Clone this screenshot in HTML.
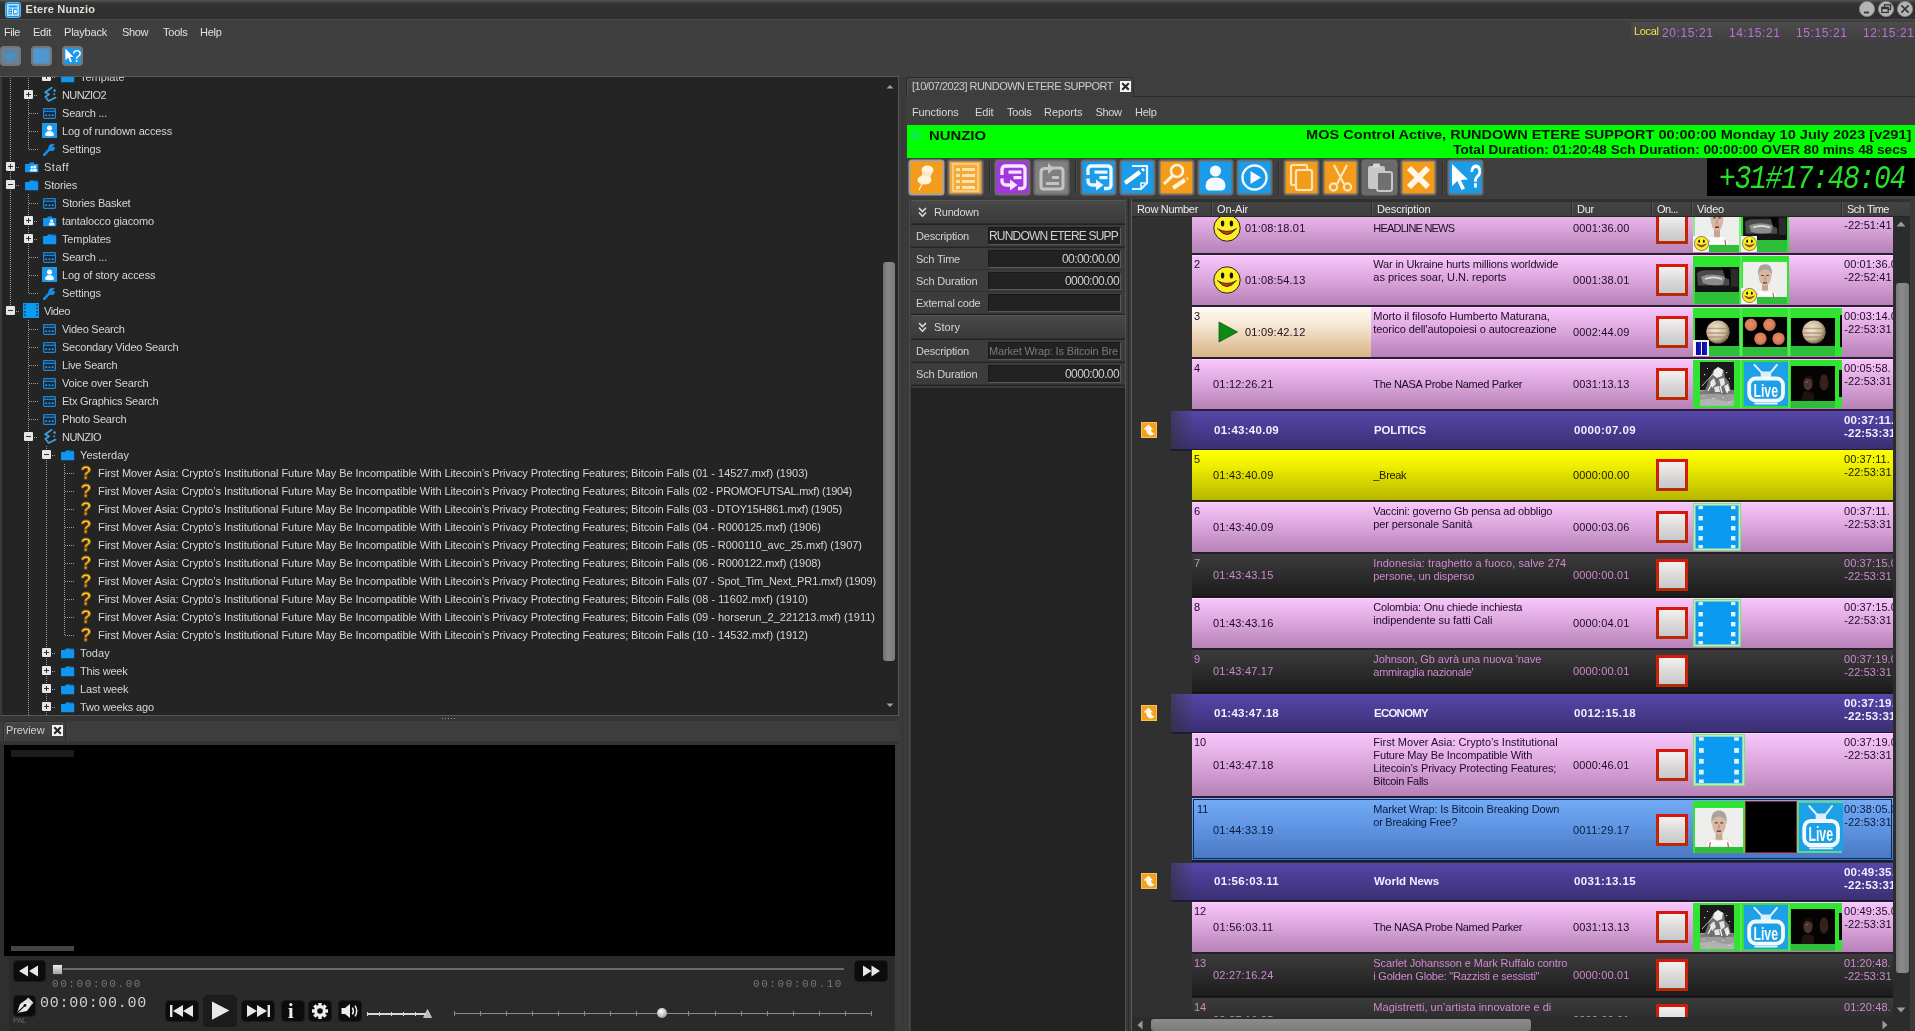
<!DOCTYPE html><html><head><meta charset="utf-8"><title>Etere Nunzio</title><style>html,body{margin:0;padding:0}body{width:1915px;height:1031px;overflow:hidden;background:#3f3f3f;position:relative;font-family:'Liberation Sans',sans-serif;font-size:11px}
div{position:absolute;box-sizing:content-box}.t{position:absolute;white-space:nowrap}.i{position:absolute;overflow:visible}</style></head><body><div id="root" style="left:0;top:0;width:1915px;height:1031px;overflow:hidden;will-change:transform;-webkit-font-smoothing:antialiased">
<svg width="0" height="0" style="position:absolute"><defs>
<linearGradient id="gq" x1="0" y1="0" x2="0" y2="1"><stop offset="0" stop-color="#ffe64a"/><stop offset="1" stop-color="#e8960c"/></linearGradient>
<linearGradient id="gchk" x1="0" y1="0" x2="0" y2="1"><stop offset="0" stop-color="#f6f4f4"/><stop offset="0.6" stop-color="#d8d6d4"/><stop offset="1" stop-color="#c4c6cc"/></linearGradient><linearGradient id="gchkb" x1="0" y1="0" x2="0" y2="1"><stop offset="0" stop-color="#d81808"/><stop offset="1" stop-color="#b82a06"/></linearGradient>
<radialGradient id="gjup" cx="0.4" cy="0.4" r="0.7"><stop offset="0" stop-color="#f4ead8"/><stop offset="0.6" stop-color="#cdb89a"/><stop offset="1" stop-color="#4a3c2c"/></radialGradient>
<radialGradient id="gmars" cx="0.45" cy="0.45" r="0.62"><stop offset="0" stop-color="#ee8e5e"/><stop offset="0.72" stop-color="#d0785a"/><stop offset="1" stop-color="#5a2a1c"/></radialGradient>
<symbol id="folder" viewBox="0 0 14 11"><path d="M0 2.2 L4 2.2 L5.2 0.6 L9.5 0.6 L9.5 2.2 L14 2.2 L14 11 L0 11 Z" fill="#1096f0"/><path d="M9.5 0.6 L13 0.6 L13.6 2.2 L9.5 2.2Z" fill="#0b78c8"/></symbol>
<symbol id="ufolder" viewBox="0 0 14 11"><path d="M0 2.2 L4 2.2 L5.2 0.6 L9.5 0.6 L9.5 2.2 L14 2.2 L14 11 L0 11 Z" fill="#1096f0"/><circle cx="9" cy="5" r="1.7" fill="#e8f4ff"/><path d="M6 10 Q6 6.6 9 6.6 Q12 6.6 12 10Z" fill="#e8f4ff"/></symbol>
<symbol id="sfolder" viewBox="0 0 14 11"><path d="M0 2.2 L4 2.2 L5.2 0.6 L9.5 0.6 L9.5 2.2 L14 2.2 L14 11 L0 11 Z" fill="#1096f0"/><circle cx="7.2" cy="5.6" r="1.5" fill="#e8f4ff"/><circle cx="10.2" cy="5" r="1.7" fill="#e8f4ff"/><path d="M5 10 Q5 7 7.4 7 L8 10Z M7.6 10 Q7.6 6.8 10.2 6.8 Q12.8 6.8 12.8 10Z" fill="#e8f4ff"/></symbol>
<symbol id="search" viewBox="0 0 13 11"><rect x="0.6" y="0.6" width="11.8" height="9.8" rx="0.8" fill="#16283a" stroke="#2285cf" stroke-width="1.2"/><rect x="0.6" y="2.6" width="11.8" height="1.3" fill="#2285cf"/><rect x="2.4" y="6.4" width="1.7" height="1.7" fill="#2ea0ee"/><rect x="5.6" y="6.4" width="1.7" height="1.7" fill="#2ea0ee"/><rect x="8.8" y="6.4" width="1.7" height="1.7" fill="#2ea0ee"/></symbol>
<symbol id="user" viewBox="0 0 16 16"><rect width="16" height="16" fill="#1a9af0"/><circle cx="8" cy="5.4" r="2.7" fill="#fff"/><path d="M3.2 13.4 Q3.2 8.4 8 8.4 Q12.8 8.4 12.8 13.4 Q8 14.6 3.2 13.4Z" fill="#fff"/></symbol>
<symbol id="wrench" viewBox="0 0 14 14"><path d="M1.2 12.8 L8 5.6" stroke="#1690ea" stroke-width="2.6" stroke-linecap="round"/><path d="M8.2 2.2 A3.4 3.4 0 1 0 12.2 6.2 L10.2 6.6 L8.2 5.2 L8.4 3Z" fill="#1690ea"/><circle cx="9.6" cy="4.4" r="2.6" fill="#1690ea"/><path d="M9.6 4.4 L13.4 0.6 L14 3 L11.6 5.6Z" fill="#252525"/></symbol>
<symbol id="nunzio" viewBox="0 0 14 15"><path d="M8.6 0.8 L2.2 5.2 L6 7.4 L2.4 9.8 L5.6 14 L12.4 10.6" fill="none" stroke="#3a9fdc" stroke-width="1.8" stroke-linejoin="round" stroke-linecap="round"/><circle cx="11.6" cy="3.6" r="1.3" fill="#3a9fdc"/><circle cx="11.2" cy="7.2" r="1" fill="#3a9fdc"/></symbol>
<symbol id="video" viewBox="0 0 16 15"><rect width="16" height="15" fill="#0a9bf5"/><g fill="#1c4f7a"><rect x="1" y="1.2" width="2" height="1.6"/><rect x="1" y="4.6" width="2" height="1.6"/><rect x="1" y="8" width="2" height="1.6"/><rect x="1" y="11.4" width="2" height="1.6"/><rect x="13" y="1.2" width="2" height="1.6"/><rect x="13" y="4.6" width="2" height="1.6"/><rect x="13" y="8" width="2" height="1.6"/><rect x="13" y="11.4" width="2" height="1.6"/></g></symbol>
<symbol id="plus" viewBox="0 0 9 9"><rect width="9" height="9" rx="1" fill="#e6e6e6"/><path d="M2 4.5H7M4.5 2V7" stroke="#333" stroke-width="1"/></symbol>
<symbol id="minus" viewBox="0 0 9 9"><rect width="9" height="9" rx="1" fill="#e6e6e6"/><path d="M2 4.5H7" stroke="#333" stroke-width="1"/></symbol>
<symbol id="smiley" viewBox="0 0 28 28"><circle cx="14" cy="14" r="13.2" fill="#ffee22" stroke="#222" stroke-width="1"/><ellipse cx="9.6" cy="9.6" rx="1.7" ry="3" fill="#111"/><ellipse cx="18.4" cy="9.6" rx="1.7" ry="3" fill="#111"/><path d="M5.6 15.4 Q14 25.6 22.4 15.4 Q14 19.4 5.6 15.4Z" fill="#e03010" stroke="#222" stroke-width="0.9"/><path d="M4.2 14.6 Q5.2 14.4 6.2 15.8 M23.8 14.6 Q22.8 14.4 21.8 15.8" stroke="#222" stroke-width="0.9" fill="none"/></symbol>
<symbol id="chk" viewBox="0 0 32 32"><rect x="1.5" y="1.5" width="29" height="29" fill="url(#gchk)" stroke="url(#gchkb)" stroke-width="3"/></symbol>
<symbol id="film" viewBox="0 0 48 48"><rect width="48" height="48" fill="#7fe47f"/><rect x="1" y="1" width="46" height="46" fill="#b8f0b8"/><rect x="2.5" y="2.5" width="43" height="43" fill="#0a9bf0"/><g fill="#dff2ff"><rect x="5.5" y="3" width="4.4" height="3.2"/><rect x="5.5" y="13" width="4.4" height="4.4"/><rect x="5.5" y="23" width="4.4" height="4.4"/><rect x="5.5" y="33" width="4.4" height="4.4"/><rect x="5.5" y="42" width="4.4" height="3.2"/><rect x="38" y="3" width="4.4" height="3.2"/><rect x="38" y="13" width="4.4" height="4.4"/><rect x="38" y="23" width="4.4" height="4.4"/><rect x="38" y="33" width="4.4" height="4.4"/><rect x="38" y="42" width="4.4" height="3.2"/></g></symbol>
<symbol id="tv" viewBox="0 0 44 44"><rect width="44" height="44" fill="#1e9fe8"/><path d="M13 3 L20 11 M31 3 L24 11" stroke="#e8f6ff" stroke-width="2.2" stroke-linecap="round"/><rect x="17" y="9.5" width="10" height="4" rx="1.5" fill="#d8eefc"/><rect x="5.5" y="15.5" width="33" height="23" rx="6" fill="none" stroke="#f2faff" stroke-width="3.4"/><path d="M12 41.5H32" stroke="#e8f6ff" stroke-width="2.4" stroke-linecap="round"/></symbol>
<symbol id="sect" viewBox="0 0 16 16"><rect width="16" height="16" fill="#f3a01c"/><rect x="0.5" y="0.5" width="15" height="15" fill="none" stroke="#f8c060" stroke-width="1"/><path d="M2.2 7.6 L7.4 2.4 L12.2 7.6 L9.8 7.6 Q10.6 11.2 13.8 11.4 Q11.4 14 8.6 13.2 Q5.4 12 5 7.6Z" fill="#fff8e8"/></symbol>
<symbol id="chev" viewBox="0 0 9 11"><path d="M1 1 L4.5 4.6 L8 1 M1 5.6 L4.5 9.2 L8 5.6" fill="none" stroke="#e0e0e0" stroke-width="1.5"/></symbol>
<symbol id="xbox" viewBox="0 0 11 11"><rect x="0" y="0" width="11" height="11" fill="#f6f6f6"/><path d="M2.2 2.2 L8.8 8.8 M8.8 2.2 L2.2 8.8" stroke="#262626" stroke-width="2.1"/></symbol>
</defs></svg>
<div style="left:0px;top:0px;width:1915px;height:20px;background:linear-gradient(#585858 0,#3e3e3e 2px,#323232 4px,#2f2f2f 100%);"></div>
<div style="left:0px;top:19px;width:1915px;height:1px;background:#4c4c4c;"></div>
<svg class="i" style="left:5px;top:2px" width="16" height="16" viewBox="0 0 17 17"><rect x="0.5" y="0.5" width="16" height="16" rx="2.5" fill="#1b93e6" stroke="#5cc0ff"/><rect x="3" y="3" width="11" height="11" fill="none" stroke="#e8f6ff" stroke-width="1.3"/><path d="M3 6.4H14 M8 6.4V14" stroke="#e8f6ff" stroke-width="1.2"/><rect x="9.6" y="8.4" width="3" height="3.6" fill="#e8f6ff"/><rect x="4.6" y="8.2" width="2" height="1.2" fill="#e8f6ff"/><rect x="4.6" y="10.8" width="2" height="1.2" fill="#e8f6ff"/></svg>
<span id="t1" class="t" style="top:1.7px;line-height:15px;font-size:11px;color:#e0dcd4;font-weight:700;left:25.6px;letter-spacing:0.196px;">Etere Nunzio</span>
<svg class="i" style="left:1859px;top:1px" width="16" height="16" viewBox="0 0 16 16"><circle cx="8" cy="8" r="7.6" fill="#b4b4b4"/><circle cx="8" cy="8" r="7.6" fill="none" stroke="#8a8a8a" stroke-width="0.8"/><path d="M5 11.5H10" stroke="#333" stroke-width="1.8"/></svg>
<svg class="i" style="left:1878px;top:1px" width="16" height="16" viewBox="0 0 16 16"><circle cx="8" cy="8" r="7.6" fill="#b4b4b4"/><circle cx="8" cy="8" r="7.6" fill="none" stroke="#8a8a8a" stroke-width="0.8"/><rect x="6.5" y="3.8" width="6" height="4.6" fill="none" stroke="#333" stroke-width="1.3"/><rect x="3.8" y="6.4" width="6.4" height="5" fill="#b8b8b8" stroke="#333" stroke-width="1.3"/><path d="M3.8 7.4H10.2" stroke="#333" stroke-width="1.6"/></svg>
<svg class="i" style="left:1897px;top:1px" width="16" height="16" viewBox="0 0 16 16"><circle cx="8" cy="8" r="7.6" fill="#b4b4b4"/><circle cx="8" cy="8" r="7.6" fill="none" stroke="#8a8a8a" stroke-width="0.8"/><path d="M4.4 4.4L11.6 11.6M11.6 4.4L4.4 11.6" stroke="#333" stroke-width="1.6"/></svg>
<span id="t2" class="t" style="top:24.5px;line-height:15px;font-size:11px;color:#e0e0e0;left:4px;letter-spacing:-0.434px;">File</span>
<span id="t3" class="t" style="top:24.5px;line-height:15px;font-size:11px;color:#e0e0e0;left:33px;letter-spacing:-0.242px;">Edit</span>
<span id="t4" class="t" style="top:24.5px;line-height:15px;font-size:11px;color:#e0e0e0;left:64px;letter-spacing:-0.205px;">Playback</span>
<span id="t5" class="t" style="top:24.5px;line-height:15px;font-size:11px;color:#e0e0e0;left:122px;letter-spacing:-0.379px;">Show</span>
<span id="t6" class="t" style="top:24.5px;line-height:15px;font-size:11px;color:#e0e0e0;left:163px;letter-spacing:-0.238px;">Tools</span>
<span id="t7" class="t" style="top:24.5px;line-height:15px;font-size:11px;color:#e0e0e0;left:200px;letter-spacing:-0.281px;">Help</span>
<div style="left:1631px;top:22px;width:284px;height:19px;background:linear-gradient(#4c4c4c,#3f3f3f);"></div>
<span id="t8" class="t" style="top:23.5px;line-height:15px;font-size:11px;color:#f0e24a;left:1634px;letter-spacing:-0.362px;">Local</span>
<span id="t9" class="t" style="top:24.5px;line-height:16px;font-size:12px;color:#c06fd6;left:1662px;letter-spacing:0.598px;">20:15:21</span>
<span id="t10" class="t" style="top:24.5px;line-height:16px;font-size:12px;color:#c06fd6;left:1729px;letter-spacing:0.598px;">14:15:21</span>
<span id="t11" class="t" style="top:24.5px;line-height:16px;font-size:12px;color:#c06fd6;left:1796px;letter-spacing:0.598px;">15:15:21</span>
<span id="t12" class="t" style="top:24.5px;line-height:16px;font-size:12px;color:#c06fd6;left:1863px;letter-spacing:0.598px;">12:15:21</span>
<svg class="i" style="left:0px;top:46px" width="21" height="20" viewBox="0 0 21 20"><rect x="1" y="1" width="19" height="18" rx="3" fill="#64849e" stroke="#767676" stroke-width="2"/><path d="M4 11 L11 6.4 L17 9.4 L10.4 14.6Z" fill="#3f94d2"/></svg>
<svg class="i" style="left:31px;top:46px" width="21" height="20" viewBox="0 0 21 20"><rect x="1" y="1" width="19" height="18" rx="3" fill="#5b8db6" stroke="#767676" stroke-width="2"/><rect x="3" y="3" width="15" height="14" fill="#4f97cf"/></svg>
<svg class="i" style="left:62px;top:46px" width="21" height="20" viewBox="0 0 21 20"><rect x="1" y="1" width="19" height="18" rx="3" fill="#1f97e8" stroke="#767676" stroke-width="2"/><path d="M3.4 2.6 L3.4 14.2 L6.2 11.6 L8.2 16.2 L10 15.4 L8 11 L11.6 11Z" fill="#fff"/></svg>
<span id="t13" class="t" style="top:46.5px;line-height:18px;font-size:16.5px;color:#f4fbff;left:72.3px;">?</span>
<div style="left:0px;top:76px;width:899px;height:1px;background:#585858;"></div>
<div id="tree" style="left:0;top:77px;width:899px;height:639px;background:#242424;overflow:hidden;border-left:2px solid #3a3a3a;border-right:1px solid #565656;border-bottom:1px solid #565656;box-sizing:border-box">
<div style="left:-2px;top:-77px;width:899px;height:800px">
<div style="left:10px;top:70px;width:1px;height:241px;background-image:repeating-linear-gradient(180deg,#9a9a9a 0,#9a9a9a 1px,transparent 1px,transparent 2px);"></div>
<div style="left:28px;top:70px;width:1px;height:79px;background-image:repeating-linear-gradient(180deg,#9a9a9a 0,#9a9a9a 1px,transparent 1px,transparent 2px);"></div>
<div style="left:28px;top:194px;width:1px;height:99px;background-image:repeating-linear-gradient(180deg,#9a9a9a 0,#9a9a9a 1px,transparent 1px,transparent 2px);"></div>
<div style="left:28px;top:320px;width:1px;height:400px;background-image:repeating-linear-gradient(180deg,#9a9a9a 0,#9a9a9a 1px,transparent 1px,transparent 2px);"></div>
<div style="left:46px;top:446px;width:1px;height:274px;background-image:repeating-linear-gradient(180deg,#9a9a9a 0,#9a9a9a 1px,transparent 1px,transparent 2px);"></div>
<div style="left:64px;top:464px;width:1px;height:171px;background-image:repeating-linear-gradient(180deg,#9a9a9a 0,#9a9a9a 1px,transparent 1px,transparent 2px);"></div>
<div style="left:52px;top:77px;width:4px;height:1px;background-image:repeating-linear-gradient(90deg,#9a9a9a 0,#9a9a9a 1px,transparent 1px,transparent 2px);"></div>
<svg class="i" style="left:42px;top:72px;" width="9" height="9"><use href="#plus"/></svg>
<svg class="i" style="left:61px;top:72px;" width="13.5" height="10.5"><use href="#folder"/></svg>
<span id="t14" class="t" style="top:69.5px;line-height:15px;font-size:11px;color:#d6d6d6;left:80px;">Template</span>
<div style="left:34px;top:95px;width:4px;height:1px;background-image:repeating-linear-gradient(90deg,#9a9a9a 0,#9a9a9a 1px,transparent 1px,transparent 2px);"></div>
<svg class="i" style="left:24px;top:90px;" width="9" height="9"><use href="#plus"/></svg>
<svg class="i" style="left:43px;top:87px;" width="14" height="15"><use href="#nunzio"/></svg>
<span id="t15" class="t" style="top:87.5px;line-height:15px;font-size:11px;color:#d6d6d6;left:62px;letter-spacing:-0.612px;">NUNZIO2</span>
<div style="left:29px;top:113px;width:10px;height:1px;background-image:repeating-linear-gradient(90deg,#9a9a9a 0,#9a9a9a 1px,transparent 1px,transparent 2px);"></div>
<svg class="i" style="left:43px;top:108px;" width="13" height="11"><use href="#search"/></svg>
<span id="t16" class="t" style="top:105.5px;line-height:15px;font-size:11px;color:#d6d6d6;left:62px;letter-spacing:-0.208px;">Search ...</span>
<div style="left:29px;top:131px;width:10px;height:1px;background-image:repeating-linear-gradient(90deg,#9a9a9a 0,#9a9a9a 1px,transparent 1px,transparent 2px);"></div>
<svg class="i" style="left:42px;top:123px;" width="15" height="15"><use href="#user"/></svg>
<span id="t17" class="t" style="top:123.5px;line-height:15px;font-size:11px;color:#d6d6d6;left:62px;letter-spacing:-0.149px;">Log of rundown access</span>
<div style="left:29px;top:149px;width:10px;height:1px;background-image:repeating-linear-gradient(90deg,#9a9a9a 0,#9a9a9a 1px,transparent 1px,transparent 2px);"></div>
<svg class="i" style="left:43px;top:142px;" width="14" height="14"><use href="#wrench"/></svg>
<span id="t18" class="t" style="top:141.5px;line-height:15px;font-size:11px;color:#d6d6d6;left:62px;letter-spacing:-0.094px;">Settings</span>
<div style="left:16px;top:167px;width:4px;height:1px;background-image:repeating-linear-gradient(90deg,#9a9a9a 0,#9a9a9a 1px,transparent 1px,transparent 2px);"></div>
<svg class="i" style="left:6px;top:162px;" width="9" height="9"><use href="#plus"/></svg>
<svg class="i" style="left:25px;top:162px;" width="13.5" height="10.5"><use href="#sfolder"/></svg>
<span id="t19" class="t" style="top:159.5px;line-height:15px;font-size:11px;color:#d6d6d6;left:44px;letter-spacing:0.515px;">Staff</span>
<div style="left:16px;top:185px;width:4px;height:1px;background-image:repeating-linear-gradient(90deg,#9a9a9a 0,#9a9a9a 1px,transparent 1px,transparent 2px);"></div>
<svg class="i" style="left:6px;top:180px;" width="9" height="9"><use href="#minus"/></svg>
<svg class="i" style="left:25px;top:180px;" width="13.5" height="10.5"><use href="#folder"/></svg>
<span id="t20" class="t" style="top:177.5px;line-height:15px;font-size:11px;color:#d6d6d6;left:44px;letter-spacing:-0.177px;">Stories</span>
<div style="left:29px;top:203px;width:10px;height:1px;background-image:repeating-linear-gradient(90deg,#9a9a9a 0,#9a9a9a 1px,transparent 1px,transparent 2px);"></div>
<svg class="i" style="left:43px;top:198px;" width="13" height="11"><use href="#search"/></svg>
<span id="t21" class="t" style="top:195.5px;line-height:15px;font-size:11px;color:#d6d6d6;left:62px;letter-spacing:-0.173px;">Stories Basket</span>
<div style="left:34px;top:221px;width:4px;height:1px;background-image:repeating-linear-gradient(90deg,#9a9a9a 0,#9a9a9a 1px,transparent 1px,transparent 2px);"></div>
<svg class="i" style="left:24px;top:216px;" width="9" height="9"><use href="#plus"/></svg>
<svg class="i" style="left:43px;top:216px;" width="13.5" height="10.5"><use href="#ufolder"/></svg>
<span id="t22" class="t" style="top:213.5px;line-height:15px;font-size:11px;color:#d6d6d6;left:62px;letter-spacing:-0.155px;">tantalocco giacomo</span>
<div style="left:34px;top:239px;width:4px;height:1px;background-image:repeating-linear-gradient(90deg,#9a9a9a 0,#9a9a9a 1px,transparent 1px,transparent 2px);"></div>
<svg class="i" style="left:24px;top:234px;" width="9" height="9"><use href="#plus"/></svg>
<svg class="i" style="left:43px;top:234px;" width="13.5" height="10.5"><use href="#folder"/></svg>
<span id="t23" class="t" style="top:231.5px;line-height:15px;font-size:11px;color:#d6d6d6;left:62px;letter-spacing:-0.127px;">Templates</span>
<div style="left:29px;top:257px;width:10px;height:1px;background-image:repeating-linear-gradient(90deg,#9a9a9a 0,#9a9a9a 1px,transparent 1px,transparent 2px);"></div>
<svg class="i" style="left:43px;top:252px;" width="13" height="11"><use href="#search"/></svg>
<span id="t24" class="t" style="top:249.5px;line-height:15px;font-size:11px;color:#d6d6d6;left:62px;letter-spacing:-0.208px;">Search ...</span>
<div style="left:29px;top:275px;width:10px;height:1px;background-image:repeating-linear-gradient(90deg,#9a9a9a 0,#9a9a9a 1px,transparent 1px,transparent 2px);"></div>
<svg class="i" style="left:42px;top:267px;" width="15" height="15"><use href="#user"/></svg>
<span id="t25" class="t" style="top:267.5px;line-height:15px;font-size:11px;color:#d6d6d6;left:62px;letter-spacing:-0.067px;">Log of story access</span>
<div style="left:29px;top:293px;width:10px;height:1px;background-image:repeating-linear-gradient(90deg,#9a9a9a 0,#9a9a9a 1px,transparent 1px,transparent 2px);"></div>
<svg class="i" style="left:43px;top:286px;" width="14" height="14"><use href="#wrench"/></svg>
<span id="t26" class="t" style="top:285.5px;line-height:15px;font-size:11px;color:#d6d6d6;left:62px;letter-spacing:-0.094px;">Settings</span>
<div style="left:16px;top:311px;width:4px;height:1px;background-image:repeating-linear-gradient(90deg,#9a9a9a 0,#9a9a9a 1px,transparent 1px,transparent 2px);"></div>
<svg class="i" style="left:6px;top:306px;" width="9" height="9"><use href="#minus"/></svg>
<svg class="i" style="left:23px;top:303px;" width="16" height="15"><use href="#video"/></svg>
<span id="t27" class="t" style="top:303.5px;line-height:15px;font-size:11px;color:#d6d6d6;left:44px;letter-spacing:-0.388px;">Video</span>
<div style="left:29px;top:329px;width:10px;height:1px;background-image:repeating-linear-gradient(90deg,#9a9a9a 0,#9a9a9a 1px,transparent 1px,transparent 2px);"></div>
<svg class="i" style="left:43px;top:324px;" width="13" height="11"><use href="#search"/></svg>
<span id="t28" class="t" style="top:321.5px;line-height:15px;font-size:11px;color:#d6d6d6;left:62px;letter-spacing:-0.279px;">Video Search</span>
<div style="left:29px;top:347px;width:10px;height:1px;background-image:repeating-linear-gradient(90deg,#9a9a9a 0,#9a9a9a 1px,transparent 1px,transparent 2px);"></div>
<svg class="i" style="left:43px;top:342px;" width="13" height="11"><use href="#search"/></svg>
<span id="t29" class="t" style="top:339.5px;line-height:15px;font-size:11px;color:#d6d6d6;left:62px;letter-spacing:-0.227px;">Secondary Video Search</span>
<div style="left:29px;top:365px;width:10px;height:1px;background-image:repeating-linear-gradient(90deg,#9a9a9a 0,#9a9a9a 1px,transparent 1px,transparent 2px);"></div>
<svg class="i" style="left:43px;top:360px;" width="13" height="11"><use href="#search"/></svg>
<span id="t30" class="t" style="top:357.5px;line-height:15px;font-size:11px;color:#d6d6d6;left:62px;letter-spacing:-0.236px;">Live Search</span>
<div style="left:29px;top:383px;width:10px;height:1px;background-image:repeating-linear-gradient(90deg,#9a9a9a 0,#9a9a9a 1px,transparent 1px,transparent 2px);"></div>
<svg class="i" style="left:43px;top:378px;" width="13" height="11"><use href="#search"/></svg>
<span id="t31" class="t" style="top:375.5px;line-height:15px;font-size:11px;color:#d6d6d6;left:62px;letter-spacing:-0.164px;">Voice over Search</span>
<div style="left:29px;top:401px;width:10px;height:1px;background-image:repeating-linear-gradient(90deg,#9a9a9a 0,#9a9a9a 1px,transparent 1px,transparent 2px);"></div>
<svg class="i" style="left:43px;top:396px;" width="13" height="11"><use href="#search"/></svg>
<span id="t32" class="t" style="top:393.5px;line-height:15px;font-size:11px;color:#d6d6d6;left:62px;letter-spacing:-0.231px;">Etx Graphics Search</span>
<div style="left:29px;top:419px;width:10px;height:1px;background-image:repeating-linear-gradient(90deg,#9a9a9a 0,#9a9a9a 1px,transparent 1px,transparent 2px);"></div>
<svg class="i" style="left:43px;top:414px;" width="13" height="11"><use href="#search"/></svg>
<span id="t33" class="t" style="top:411.5px;line-height:15px;font-size:11px;color:#d6d6d6;left:62px;letter-spacing:-0.180px;">Photo Search</span>
<div style="left:34px;top:437px;width:4px;height:1px;background-image:repeating-linear-gradient(90deg,#9a9a9a 0,#9a9a9a 1px,transparent 1px,transparent 2px);"></div>
<svg class="i" style="left:24px;top:432px;" width="9" height="9"><use href="#minus"/></svg>
<svg class="i" style="left:43px;top:429px;" width="14" height="15"><use href="#nunzio"/></svg>
<span id="t34" class="t" style="top:429.5px;line-height:15px;font-size:11px;color:#d6d6d6;left:62px;letter-spacing:-0.529px;">NUNZIO</span>
<div style="left:52px;top:455px;width:4px;height:1px;background-image:repeating-linear-gradient(90deg,#9a9a9a 0,#9a9a9a 1px,transparent 1px,transparent 2px);"></div>
<svg class="i" style="left:42px;top:450px;" width="9" height="9"><use href="#minus"/></svg>
<svg class="i" style="left:61px;top:450px;" width="13.5" height="10.5"><use href="#folder"/></svg>
<span id="t35" class="t" style="top:447.5px;line-height:15px;font-size:11px;color:#d6d6d6;left:80px;letter-spacing:0.052px;">Yesterday</span>
<div style="left:65px;top:473px;width:10px;height:1px;background-image:repeating-linear-gradient(90deg,#9a9a9a 0,#9a9a9a 1px,transparent 1px,transparent 2px);"></div>
<svg class="i" style="left:79px;top:465px" width="14" height="16" viewBox="0 0 14 16"><text x="7" y="14" text-anchor="middle" font-family="Liberation Sans" font-weight="700" font-size="18" fill="url(#gq)" stroke="#9a5e06" stroke-width="0.8">?</text></svg>
<span id="t36" class="t" style="top:465.5px;line-height:15px;font-size:11px;color:#d6d6d6;left:98px;letter-spacing:-0.083px;">First Mover Asia: Crypto’s Institutional Future May Be Incompatible With Litecoin’s Privacy Protecting Features; Bitcoin Falls</span>
<span id="t37" class="t" style="top:465.5px;line-height:15px;font-size:11px;color:#d6d6d6;left:692.3px;letter-spacing:0.006px;">(01 - 14527.mxf) (1903)</span>
<div style="left:65px;top:491px;width:10px;height:1px;background-image:repeating-linear-gradient(90deg,#9a9a9a 0,#9a9a9a 1px,transparent 1px,transparent 2px);"></div>
<svg class="i" style="left:79px;top:483px" width="14" height="16" viewBox="0 0 14 16"><text x="7" y="14" text-anchor="middle" font-family="Liberation Sans" font-weight="700" font-size="18" fill="url(#gq)" stroke="#9a5e06" stroke-width="0.8">?</text></svg>
<span id="t38" class="t" style="top:483.5px;line-height:15px;font-size:11px;color:#d6d6d6;left:98px;letter-spacing:-0.083px;">First Mover Asia: Crypto’s Institutional Future May Be Incompatible With Litecoin’s Privacy Protecting Features; Bitcoin Falls</span>
<span id="t39" class="t" style="top:483.5px;line-height:15px;font-size:11px;color:#d6d6d6;left:692.3px;letter-spacing:-0.311px;">(02 - PROMOFUTSAL.mxf) (1904)</span>
<div style="left:65px;top:509px;width:10px;height:1px;background-image:repeating-linear-gradient(90deg,#9a9a9a 0,#9a9a9a 1px,transparent 1px,transparent 2px);"></div>
<svg class="i" style="left:79px;top:501px" width="14" height="16" viewBox="0 0 14 16"><text x="7" y="14" text-anchor="middle" font-family="Liberation Sans" font-weight="700" font-size="18" fill="url(#gq)" stroke="#9a5e06" stroke-width="0.8">?</text></svg>
<span id="t40" class="t" style="top:501.5px;line-height:15px;font-size:11px;color:#d6d6d6;left:98px;letter-spacing:-0.083px;">First Mover Asia: Crypto’s Institutional Future May Be Incompatible With Litecoin’s Privacy Protecting Features; Bitcoin Falls</span>
<span id="t41" class="t" style="top:501.5px;line-height:15px;font-size:11px;color:#d6d6d6;left:692.3px;letter-spacing:-0.149px;">(03 - DTOY15H861.mxf) (1905)</span>
<div style="left:65px;top:527px;width:10px;height:1px;background-image:repeating-linear-gradient(90deg,#9a9a9a 0,#9a9a9a 1px,transparent 1px,transparent 2px);"></div>
<svg class="i" style="left:79px;top:519px" width="14" height="16" viewBox="0 0 14 16"><text x="7" y="14" text-anchor="middle" font-family="Liberation Sans" font-weight="700" font-size="18" fill="url(#gq)" stroke="#9a5e06" stroke-width="0.8">?</text></svg>
<span id="t42" class="t" style="top:519.5px;line-height:15px;font-size:11px;color:#d6d6d6;left:98px;letter-spacing:-0.083px;">First Mover Asia: Crypto’s Institutional Future May Be Incompatible With Litecoin’s Privacy Protecting Features; Bitcoin Falls</span>
<span id="t43" class="t" style="top:519.5px;line-height:15px;font-size:11px;color:#d6d6d6;left:692.3px;letter-spacing:-0.037px;">(04 - R000125.mxf) (1906)</span>
<div style="left:65px;top:545px;width:10px;height:1px;background-image:repeating-linear-gradient(90deg,#9a9a9a 0,#9a9a9a 1px,transparent 1px,transparent 2px);"></div>
<svg class="i" style="left:79px;top:537px" width="14" height="16" viewBox="0 0 14 16"><text x="7" y="14" text-anchor="middle" font-family="Liberation Sans" font-weight="700" font-size="18" fill="url(#gq)" stroke="#9a5e06" stroke-width="0.8">?</text></svg>
<span id="t44" class="t" style="top:537.5px;line-height:15px;font-size:11px;color:#d6d6d6;left:98px;letter-spacing:-0.083px;">First Mover Asia: Crypto’s Institutional Future May Be Incompatible With Litecoin’s Privacy Protecting Features; Bitcoin Falls</span>
<span id="t45" class="t" style="top:537.5px;line-height:15px;font-size:11px;color:#d6d6d6;left:692.3px;letter-spacing:-0.022px;">(05 - R000110_avc_25.mxf) (1907)</span>
<div style="left:65px;top:563px;width:10px;height:1px;background-image:repeating-linear-gradient(90deg,#9a9a9a 0,#9a9a9a 1px,transparent 1px,transparent 2px);"></div>
<svg class="i" style="left:79px;top:555px" width="14" height="16" viewBox="0 0 14 16"><text x="7" y="14" text-anchor="middle" font-family="Liberation Sans" font-weight="700" font-size="18" fill="url(#gq)" stroke="#9a5e06" stroke-width="0.8">?</text></svg>
<span id="t46" class="t" style="top:555.5px;line-height:15px;font-size:11px;color:#d6d6d6;left:98px;letter-spacing:-0.083px;">First Mover Asia: Crypto’s Institutional Future May Be Incompatible With Litecoin’s Privacy Protecting Features; Bitcoin Falls</span>
<span id="t47" class="t" style="top:555.5px;line-height:15px;font-size:11px;color:#d6d6d6;left:692.3px;letter-spacing:-0.037px;">(06 - R000122.mxf) (1908)</span>
<div style="left:65px;top:581px;width:10px;height:1px;background-image:repeating-linear-gradient(90deg,#9a9a9a 0,#9a9a9a 1px,transparent 1px,transparent 2px);"></div>
<svg class="i" style="left:79px;top:573px" width="14" height="16" viewBox="0 0 14 16"><text x="7" y="14" text-anchor="middle" font-family="Liberation Sans" font-weight="700" font-size="18" fill="url(#gq)" stroke="#9a5e06" stroke-width="0.8">?</text></svg>
<span id="t48" class="t" style="top:573.5px;line-height:15px;font-size:11px;color:#d6d6d6;left:98px;letter-spacing:-0.083px;">First Mover Asia: Crypto’s Institutional Future May Be Incompatible With Litecoin’s Privacy Protecting Features; Bitcoin Falls</span>
<span id="t49" class="t" style="top:573.5px;line-height:15px;font-size:11px;color:#d6d6d6;left:692.3px;letter-spacing:-0.120px;">(07 - Spot_Tim_Next_PR1.mxf) (1909)</span>
<div style="left:65px;top:599px;width:10px;height:1px;background-image:repeating-linear-gradient(90deg,#9a9a9a 0,#9a9a9a 1px,transparent 1px,transparent 2px);"></div>
<svg class="i" style="left:79px;top:591px" width="14" height="16" viewBox="0 0 14 16"><text x="7" y="14" text-anchor="middle" font-family="Liberation Sans" font-weight="700" font-size="18" fill="url(#gq)" stroke="#9a5e06" stroke-width="0.8">?</text></svg>
<span id="t50" class="t" style="top:591.5px;line-height:15px;font-size:11px;color:#d6d6d6;left:98px;letter-spacing:-0.083px;">First Mover Asia: Crypto’s Institutional Future May Be Incompatible With Litecoin’s Privacy Protecting Features; Bitcoin Falls</span>
<span id="t51" class="t" style="top:591.5px;line-height:15px;font-size:11px;color:#d6d6d6;left:692.3px;letter-spacing:0.042px;">(08 - 11602.mxf) (1910)</span>
<div style="left:65px;top:617px;width:10px;height:1px;background-image:repeating-linear-gradient(90deg,#9a9a9a 0,#9a9a9a 1px,transparent 1px,transparent 2px);"></div>
<svg class="i" style="left:79px;top:609px" width="14" height="16" viewBox="0 0 14 16"><text x="7" y="14" text-anchor="middle" font-family="Liberation Sans" font-weight="700" font-size="18" fill="url(#gq)" stroke="#9a5e06" stroke-width="0.8">?</text></svg>
<span id="t52" class="t" style="top:609.5px;line-height:15px;font-size:11px;color:#d6d6d6;left:98px;letter-spacing:-0.083px;">First Mover Asia: Crypto’s Institutional Future May Be Incompatible With Litecoin’s Privacy Protecting Features; Bitcoin Falls</span>
<span id="t53" class="t" style="top:609.5px;line-height:15px;font-size:11px;color:#d6d6d6;left:692.3px;letter-spacing:0.002px;">(09 - horserun_2_221213.mxf) (1911)</span>
<div style="left:65px;top:635px;width:10px;height:1px;background-image:repeating-linear-gradient(90deg,#9a9a9a 0,#9a9a9a 1px,transparent 1px,transparent 2px);"></div>
<svg class="i" style="left:79px;top:627px" width="14" height="16" viewBox="0 0 14 16"><text x="7" y="14" text-anchor="middle" font-family="Liberation Sans" font-weight="700" font-size="18" fill="url(#gq)" stroke="#9a5e06" stroke-width="0.8">?</text></svg>
<span id="t54" class="t" style="top:627.5px;line-height:15px;font-size:11px;color:#d6d6d6;left:98px;letter-spacing:-0.083px;">First Mover Asia: Crypto’s Institutional Future May Be Incompatible With Litecoin’s Privacy Protecting Features; Bitcoin Falls</span>
<span id="t55" class="t" style="top:627.5px;line-height:15px;font-size:11px;color:#d6d6d6;left:692.3px;letter-spacing:0.006px;">(10 - 14532.mxf) (1912)</span>
<div style="left:52px;top:653px;width:4px;height:1px;background-image:repeating-linear-gradient(90deg,#9a9a9a 0,#9a9a9a 1px,transparent 1px,transparent 2px);"></div>
<svg class="i" style="left:42px;top:648px;" width="9" height="9"><use href="#plus"/></svg>
<svg class="i" style="left:61px;top:648px;" width="13.5" height="10.5"><use href="#folder"/></svg>
<span id="t56" class="t" style="top:645.5px;line-height:15px;font-size:11px;color:#d6d6d6;left:80px;letter-spacing:0.128px;">Today</span>
<div style="left:52px;top:671px;width:4px;height:1px;background-image:repeating-linear-gradient(90deg,#9a9a9a 0,#9a9a9a 1px,transparent 1px,transparent 2px);"></div>
<svg class="i" style="left:42px;top:666px;" width="9" height="9"><use href="#plus"/></svg>
<svg class="i" style="left:61px;top:666px;" width="13.5" height="10.5"><use href="#folder"/></svg>
<span id="t57" class="t" style="top:663.5px;line-height:15px;font-size:11px;color:#d6d6d6;left:80px;letter-spacing:-0.224px;">This week</span>
<div style="left:52px;top:689px;width:4px;height:1px;background-image:repeating-linear-gradient(90deg,#9a9a9a 0,#9a9a9a 1px,transparent 1px,transparent 2px);"></div>
<svg class="i" style="left:42px;top:684px;" width="9" height="9"><use href="#plus"/></svg>
<svg class="i" style="left:61px;top:684px;" width="13.5" height="10.5"><use href="#folder"/></svg>
<span id="t58" class="t" style="top:681.5px;line-height:15px;font-size:11px;color:#d6d6d6;left:80px;letter-spacing:-0.115px;">Last week</span>
<div style="left:52px;top:707px;width:4px;height:1px;background-image:repeating-linear-gradient(90deg,#9a9a9a 0,#9a9a9a 1px,transparent 1px,transparent 2px);"></div>
<svg class="i" style="left:42px;top:702px;" width="9" height="9"><use href="#plus"/></svg>
<svg class="i" style="left:61px;top:702px;" width="13.5" height="10.5"><use href="#folder"/></svg>
<span id="t59" class="t" style="top:699.5px;line-height:15px;font-size:11px;color:#d6d6d6;left:80px;letter-spacing:-0.141px;">Two weeks ago</span>
</div>
<svg class="i" style="left:883px;top:6px" width="10" height="6"><path d="M1.5 5.5L5 2L8.5 5.5Z" fill="#a2a2a2"/></svg>
<svg class="i" style="left:883px;top:626px" width="10" height="6"><path d="M1.5 0.5L5 4L8.5 0.5Z" fill="#a2a2a2"/></svg>
<div style="left:881px;top:185px;width:12px;height:399px;background:linear-gradient(90deg,#727272,#888 40%,#7a7a7a);border-radius:3px;"></div>
</div>
<div style="left:899px;top:77px;width:8px;height:954px;background:#3b3b3b;"></div>
<div style="left:902px;top:100px;width:1px;height:931px;background:#343434;"></div>
<div style="left:0px;top:716px;width:899px;height:5px;background:#353535;"></div>
<div style="left:442px;top:718px;width:1px;height:1px;background:#999;"></div>
<div style="left:445px;top:718px;width:1px;height:1px;background:#999;"></div>
<div style="left:448px;top:718px;width:1px;height:1px;background:#999;"></div>
<div style="left:451px;top:718px;width:1px;height:1px;background:#999;"></div>
<div style="left:454px;top:718px;width:1px;height:1px;background:#999;"></div>
<div style="left:0px;top:721px;width:899px;height:21px;background:#3d3d3d;"></div>
<div style="left:3px;top:721px;width:63px;height:21px;background:linear-gradient(#454545,#3c3c3c);border:1px solid #2c2c2c;border-bottom:none;border-radius:4px 4px 0 0;box-sizing:border-box;box-shadow:inset 1px 1px 0 #505050;"></div>
<span id="t60" class="t" style="top:722.5px;line-height:15px;font-size:11px;color:#cfcfcf;left:6px;letter-spacing:-0.091px;">Preview</span>
<svg class="i" style="left:52px;top:725px;" width="11" height="11"><use href="#xbox"/></svg>
<div style="left:0px;top:741px;width:899px;height:4px;background:#333;"></div>
<div style="left:0px;top:745px;width:899px;height:286px;background:#2f2f2f;"></div>
<div style="left:4px;top:745px;width:891px;height:211px;background:#000;"></div>
<div style="left:11px;top:750px;width:63px;height:7px;background:#1c1c1c;"></div>
<div style="left:11px;top:946px;width:63px;height:5px;background:#454545;"></div>
<div style="left:9px;top:956px;width:885px;height:75px;background:#2a2a2a;"></div>
<div style="left:895px;top:744px;width:4px;height:287px;background:#3a3a3a;"></div>
<svg class="i" style="left:13px;top:960px" width="33" height="22" viewBox="0 0 33 22"><rect x="0.5" y="0.5" width="32" height="21" rx="4" fill="#0c0c0c" stroke="#1a1a1a"/><path d="M15 5.5V16.5L6 11ZM25 5.5V16.5L16 11Z" fill="#e8e8e8"/></svg>
<svg class="i" style="left:854px;top:960px" width="34" height="22" viewBox="0 0 34 22"><rect x="0.5" y="0.5" width="33" height="21" rx="4" fill="#0c0c0c" stroke="#1a1a1a"/><path d="M9 5.5V16.5L17.5 11ZM17.5 5.5V16.5L26 11Z" fill="#e8e8e8"/></svg>
<div style="left:52px;top:968px;width:792px;height:2px;background:#6a6a6a;"></div>
<div style="left:52px;top:964px;width:11px;height:11px;background:linear-gradient(#f0f0f0,#a0a0a0);border:1px solid #333;box-sizing:border-box;"></div>
<span id="t61" class="t" style="top:976.5px;line-height:15px;font-size:11px;color:#777;font-family:'Liberation Mono',monospace;left:52px;letter-spacing:1.580px;">00:00:00.00</span>
<span id="t62" class="t" style="top:976.5px;line-height:15px;font-size:11px;color:#777;font-family:'Liberation Mono',monospace;left:753px;letter-spacing:1.580px;">00:00:00.10</span>
<svg class="i" style="left:13px;top:995px" width="23" height="22" viewBox="0 0 23 22"><rect x="0.5" y="0.5" width="22" height="21" rx="4" fill="#0c0c0c" stroke="#1a1a1a"/><path d="M4 18 L7 9 L14 4 L19 9 L14 16Z" fill="#e8e8e8"/><path d="M4 18L11.4 10.8" stroke="#0c0c0c" stroke-width="1.1"/><circle cx="12" cy="10.4" r="1.4" fill="#0c0c0c"/><path d="M15.2 2.6L20.4 7.8L19 9.2L13.8 4Z" fill="#e8e8e8"/></svg>
<span id="t63" class="t" style="top:993.5px;line-height:19px;font-size:15px;color:#d0d0d0;font-family:'Liberation Mono',monospace;left:40px;letter-spacing:0.725px;">00:00:00.00</span>
<span id="t64" class="t" style="top:1015.0px;line-height:12px;font-size:8px;color:#666;left:13px;letter-spacing:-0.510px;">PAL</span>
<svg class="i" style="left:165px;top:1000px" width="34" height="22" viewBox="0 0 34 22"><rect x="0.5" y="0.5" width="33" height="21" rx="4" fill="#0c0c0c" stroke="#1a1a1a"/><rect x="5" y="5" width="2.4" height="12" fill="#e8e8e8"/><path d="M18 5V17L8 11ZM28 5V17L18 11Z" fill="#e8e8e8"/></svg>
<svg class="i" style="left:203px;top:995px" width="34" height="32" viewBox="0 0 34 32"><rect x="0.5" y="0.5" width="33" height="31" rx="4" fill="#1c1c1c" stroke="#1a1a1a"/><path d="M9 6.4V24.8L26.4 15.6Z" fill="#e8e8e8"/></svg>
<svg class="i" style="left:241px;top:1000px" width="34" height="22" viewBox="0 0 34 22"><rect x="0.5" y="0.5" width="33" height="21" rx="4" fill="#0c0c0c" stroke="#1a1a1a"/><rect x="26.6" y="5" width="2.4" height="12" fill="#e8e8e8"/><path d="M6 5V17L16 11ZM16 5V17L26 11Z" fill="#e8e8e8"/></svg>
<svg class="i" style="left:281px;top:1000px" width="24" height="22" viewBox="0 0 24 22"><rect x="0.5" y="0.5" width="23" height="21" rx="4" fill="#0c0c0c" stroke="#1a1a1a"/></svg>
<span id="t65" class="t" style="top:1000.0px;line-height:22px;font-size:20px;color:#f0f0f0;font-family:'Liberation Serif',serif;font-weight:700;left:288px;">i</span>
<svg class="i" style="left:308px;top:1000px" width="24" height="22" viewBox="0 0 24 22"><rect x="0.5" y="0.5" width="23" height="21" rx="4" fill="#0c0c0c" stroke="#1a1a1a"/><g transform="translate(12 11)"><g fill="#ececec"><rect x="-1.7" y="-8" width="3.4" height="16"/><rect x="-1.7" y="-8" width="3.4" height="16" transform="rotate(45)"/><rect x="-1.7" y="-8" width="3.4" height="16" transform="rotate(90)"/><rect x="-1.7" y="-8" width="3.4" height="16" transform="rotate(135)"/><circle r="6"/></g><circle r="2.8" fill="#0c0c0c"/></g></svg>
<svg class="i" style="left:338px;top:1000px" width="24" height="22" viewBox="0 0 24 22"><rect x="0.5" y="0.5" width="23" height="21" rx="4" fill="#0c0c0c" stroke="#1a1a1a"/><path d="M3.5 8H7L12 4V18L7 14H3.5Z" fill="#ececec"/><path d="M14.4 7.6Q16.4 11 14.4 14.4M17 5.6Q20.4 11 17 16.4" stroke="#ececec" stroke-width="1.5" fill="none"/></svg>
<div style="left:367px;top:1013px;width:60px;height:2px;background:#d8d8d8;"></div>
<div style="left:367px;top:1012px;width:1px;height:4px;background:#d8d8d8;"></div>
<div style="left:379px;top:1012px;width:1px;height:4px;background:#d8d8d8;"></div>
<div style="left:391px;top:1012px;width:1px;height:4px;background:#d8d8d8;"></div>
<div style="left:403px;top:1012px;width:1px;height:4px;background:#d8d8d8;"></div>
<div style="left:415px;top:1012px;width:1px;height:4px;background:#d8d8d8;"></div>
<div style="left:427px;top:1012px;width:1px;height:4px;background:#d8d8d8;"></div>
<svg class="i" style="left:423px;top:1009px" width="9" height="9"><path d="M0.5 8.5L4.5 0.5L8.5 8.5Z" fill="#bdbdbd" stroke="#eee" stroke-width="0.6"/></svg>
<div style="left:454px;top:1013px;width:418px;height:1px;background:#8a8a8a;"></div>
<div style="left:454px;top:1011px;width:1px;height:5px;background:#8a8a8a;"></div>
<div style="left:480px;top:1011px;width:1px;height:5px;background:#8a8a8a;"></div>
<div style="left:506px;top:1011px;width:1px;height:5px;background:#8a8a8a;"></div>
<div style="left:532px;top:1011px;width:1px;height:5px;background:#8a8a8a;"></div>
<div style="left:558px;top:1011px;width:1px;height:5px;background:#8a8a8a;"></div>
<div style="left:584px;top:1011px;width:1px;height:5px;background:#8a8a8a;"></div>
<div style="left:610px;top:1011px;width:1px;height:5px;background:#8a8a8a;"></div>
<div style="left:636px;top:1011px;width:1px;height:5px;background:#8a8a8a;"></div>
<div style="left:662px;top:1011px;width:1px;height:5px;background:#8a8a8a;"></div>
<div style="left:688px;top:1011px;width:1px;height:5px;background:#8a8a8a;"></div>
<div style="left:715px;top:1011px;width:1px;height:5px;background:#8a8a8a;"></div>
<div style="left:741px;top:1011px;width:1px;height:5px;background:#8a8a8a;"></div>
<div style="left:767px;top:1011px;width:1px;height:5px;background:#8a8a8a;"></div>
<div style="left:793px;top:1011px;width:1px;height:5px;background:#8a8a8a;"></div>
<div style="left:819px;top:1011px;width:1px;height:5px;background:#8a8a8a;"></div>
<div style="left:845px;top:1011px;width:1px;height:5px;background:#8a8a8a;"></div>
<div style="left:871px;top:1011px;width:1px;height:5px;background:#8a8a8a;"></div>
<div style="left:657px;top:1008px;width:10px;height:10px;background:radial-gradient(circle at 40% 35%,#fff,#aaa 70%,#777);border-radius:50%;"></div>
<div style="left:907px;top:96px;width:1008px;height:1px;background:#2a2a2a;"></div>
<div style="left:906px;top:77px;width:228px;height:20px;background:linear-gradient(#474747,#3c3c3c);border:1px solid #2b2b2b;border-bottom:none;border-radius:4px 4px 0 0;box-sizing:border-box;box-shadow:inset 1px 1px 0 #505050;"></div>
<span id="t66" class="t" style="top:79.0px;line-height:15px;font-size:11px;color:#cdcdcd;left:912px;letter-spacing:-0.519px;">[10/07/2023] RUNDOWN ETERE SUPPORT</span>
<svg class="i" style="left:1120px;top:81px;" width="11" height="11"><use href="#xbox"/></svg>
<span id="t67" class="t" style="top:104.5px;line-height:15px;font-size:11px;color:#d8d8d8;left:912px;letter-spacing:-0.132px;">Functions</span>
<span id="t68" class="t" style="top:104.5px;line-height:15px;font-size:11px;color:#d8d8d8;left:975px;letter-spacing:-0.117px;">Edit</span>
<span id="t69" class="t" style="top:104.5px;line-height:15px;font-size:11px;color:#d8d8d8;left:1007px;letter-spacing:-0.238px;">Tools</span>
<span id="t70" class="t" style="top:104.5px;line-height:15px;font-size:11px;color:#d8d8d8;left:1044px;letter-spacing:-0.004px;">Reports</span>
<span id="t71" class="t" style="top:104.5px;line-height:15px;font-size:11px;color:#d8d8d8;left:1095.5px;letter-spacing:-0.379px;">Show</span>
<span id="t72" class="t" style="top:104.5px;line-height:15px;font-size:11px;color:#d8d8d8;left:1135px;letter-spacing:-0.281px;">Help</span>
<div style="left:907px;top:125px;width:1008px;height:33px;background:#00ff00;"></div>
<svg class="i" style="left:909px;top:129px" width="13" height="13" viewBox="0 0 13 13"><g stroke="#18d89a" stroke-width="1.3"><path d="M6.5 1.5V11.5M1.5 6.5H11.5M3 3L10 10M10 3L3 10"/></g><circle cx="6.5" cy="6.5" r="2" fill="#00ff00"/></svg>
<span id="t73" class="t" style="top:126.5px;line-height:17px;font-size:13px;color:#06140a;font-weight:700;left:929px;transform:scaleX(1.144);transform-origin:0 50%;">NUNZIO</span>
<span id="t74" class="t" style="top:125.5px;line-height:17px;font-size:13px;color:#06140a;font-weight:700;right:4px;transform:scaleX(1.118);transform-origin:100% 50%;">MOS Control Active, RUNDOWN ETERE SUPPORT 00:00:00 Monday 10 July 2023 [v291]</span>
<span id="t75" class="t" style="top:141.5px;line-height:16px;font-size:12px;color:#06140a;font-weight:700;right:8px;transform:scaleX(1.1315);transform-origin:100% 50%;">Total Duration: 01:20:48 Sch Duration: 00:00:00 OVER 80 mins 48 secs</span>
<svg class="i" style="left:908px;top:159px" width="37" height="37" viewBox="0 0 37 37"><rect x="0.5" y="0.5" width="36" height="36" rx="3.5" fill="#a0a0a0"/><rect x="2.5" y="2.5" width="32" height="32" rx="1" fill="#f39b1a"/><ellipse cx="19.5" cy="11" rx="6" ry="4.6" fill="#fff3dc"/><path d="M14.5 13 L13 19 L21 22 L24 14Z" fill="#fbe6c2"/><ellipse cx="16.5" cy="21" rx="7" ry="4.6" fill="#fff3dc"/><path d="M14 25L11 31" stroke="#fff3dc" stroke-width="1.3"/></svg>
<svg class="i" style="left:947px;top:159px" width="37" height="37" viewBox="0 0 37 37"><rect x="0.5" y="0.5" width="36" height="36" rx="3.5" fill="#6c6c6c"/><rect x="2.5" y="2.5" width="32" height="32" rx="1" fill="#f5a93a"/><rect x="6" y="5" width="25" height="27" fill="none" stroke="#fbd48c" stroke-width="1.6"/><g fill="#fde2ae"><rect x="9" y="9" width="4" height="3"/><rect x="9" y="15" width="4" height="3"/><rect x="9" y="21" width="4" height="3"/><rect x="9" y="27" width="4" height="3"/><rect x="15" y="9" width="13" height="3"/><rect x="15" y="15" width="13" height="3"/><rect x="15" y="21" width="13" height="3"/><rect x="15" y="27" width="13" height="3"/></g></svg>
<svg class="i" style="left:994px;top:159px" width="37" height="37" viewBox="0 0 37 37"><rect x="0.5" y="0.5" width="36" height="36" rx="3.5" fill="#6c6c6c"/><rect x="2.5" y="2.5" width="32" height="32" rx="1" fill="#a436e0"/><path d="M8 16V10.5Q8 7 11.5 7H27.5Q31 7 31 10.5V26Q31 29.5 27.5 29.5H24" fill="none" stroke="#f6e8ff" stroke-width="3.3"/><rect x="14.5" y="11.5" width="13" height="3.2" fill="#f6e8ff"/><rect x="19.5" y="17" width="8" height="3.2" fill="#f6e8ff"/><path d="M8 19.5V21.5Q8 26 12.5 26H17" fill="none" stroke="#f6e8ff" stroke-width="3.3"/><path d="M16 20.5L23.5 26L16 31.5Z" fill="#f6e8ff"/></svg>
<svg class="i" style="left:1033px;top:159px" width="37" height="37" viewBox="0 0 37 37"><rect x="0.5" y="0.5" width="36" height="36" rx="3.5" fill="#6c6c6c"/><rect x="2.5" y="2.5" width="32" height="32" rx="1" fill="#808080"/><path d="M17 9H27Q30 9 30 12V27Q30 30 27 30H11Q8 30 8 27V17" fill="none" stroke="#c4c4c4" stroke-width="3"/><path d="M8 17V13Q8 9.6 12 9.6H16" fill="none" stroke="#c4c4c4" stroke-width="3"/><path d="M15 4L21 9.6L15 15Z" fill="#c4c4c4"/><rect x="19" y="17" width="7" height="3" fill="#c4c4c4"/><rect x="13" y="23" width="13" height="3" fill="#c4c4c4"/></svg>
<svg class="i" style="left:1080px;top:159px" width="37" height="37" viewBox="0 0 37 37"><rect x="0.5" y="0.5" width="36" height="36" rx="3.5" fill="#6c6c6c"/><rect x="2.5" y="2.5" width="32" height="32" rx="1" fill="#1b9be8"/><path d="M8 16V10.5Q8 7 11.5 7H27.5Q31 7 31 10.5V26Q31 29.5 27.5 29.5H24" fill="none" stroke="#eef8ff" stroke-width="3.3"/><rect x="14.5" y="11.5" width="13" height="3.2" fill="#eef8ff"/><rect x="19.5" y="17" width="8" height="3.2" fill="#eef8ff"/><path d="M8 19.5V21.5Q8 26 12.5 26H17" fill="none" stroke="#eef8ff" stroke-width="3.3"/><path d="M16 20.5L23.5 26L16 31.5Z" fill="#eef8ff"/></svg>
<svg class="i" style="left:1119px;top:159px" width="37" height="37" viewBox="0 0 37 37"><rect x="0.5" y="0.5" width="36" height="36" rx="3.5" fill="#6c6c6c"/><rect x="2.5" y="2.5" width="32" height="32" rx="1" fill="#1b9be8"/><path d="M13 7H28V24L22 30H13" fill="none" stroke="#eaf6ff" stroke-width="2.2"/><path d="M28 24H22V30" fill="none" stroke="#eaf6ff" stroke-width="1.6"/><path d="M6 24L21 13" stroke="#1b9be8" stroke-width="7"/><path d="M6 24L21 13" stroke="#fff" stroke-width="4.2"/><path d="M23 11.5L25 10" stroke="#fff" stroke-width="3.4"/></svg>
<svg class="i" style="left:1158px;top:159px" width="37" height="37" viewBox="0 0 37 37"><rect x="0.5" y="0.5" width="36" height="36" rx="3.5" fill="#6c6c6c"/><rect x="2.5" y="2.5" width="32" height="32" rx="1" fill="#f39b1a"/><circle cx="19" cy="12" r="6" fill="none" stroke="#fff3dc" stroke-width="2.6"/><path d="M14.6 16.6L6 25" stroke="#fff3dc" stroke-width="3"/><path d="M15 29L27 21" stroke="#fff3dc" stroke-width="4"/><path d="M28.6 20L30 19" stroke="#fbd48c" stroke-width="3"/></svg>
<svg class="i" style="left:1197px;top:159px" width="37" height="37" viewBox="0 0 37 37"><rect x="0.5" y="0.5" width="36" height="36" rx="3.5" fill="#6c6c6c"/><rect x="2.5" y="2.5" width="32" height="32" rx="1" fill="#1b9be8"/><circle cx="18.5" cy="12" r="5.6" fill="#f4faff"/><path d="M8.5 27Q8.5 18.5 18.5 18.5Q28.5 18.5 28.5 27Q28 31 25 31.5H12Q9 31 8.5 27Z" fill="#f4faff"/></svg>
<svg class="i" style="left:1236px;top:159px" width="37" height="37" viewBox="0 0 37 37"><rect x="0.5" y="0.5" width="36" height="36" rx="3.5" fill="#6c6c6c"/><rect x="2.5" y="2.5" width="32" height="32" rx="1" fill="#1b9be8"/><circle cx="18.5" cy="18.5" r="12" fill="none" stroke="#f4faff" stroke-width="2.4"/><path d="M14.5 12V25L25 18.5Z" fill="#f4faff"/></svg>
<svg class="i" style="left:1283px;top:159px" width="37" height="37" viewBox="0 0 37 37"><rect x="0.5" y="0.5" width="36" height="36" rx="3.5" fill="#6c6c6c"/><rect x="2.5" y="2.5" width="32" height="32" rx="1" fill="#f39b1a"/><rect x="8" y="6" width="16" height="20" rx="2" fill="none" stroke="#fde6b8" stroke-width="2.2"/><rect x="13" y="11" width="16" height="20" rx="2" fill="#f39b1a" stroke="#fde6b8" stroke-width="2.2"/></svg>
<svg class="i" style="left:1322px;top:159px" width="37" height="37" viewBox="0 0 37 37"><rect x="0.5" y="0.5" width="36" height="36" rx="3.5" fill="#6c6c6c"/><rect x="2.5" y="2.5" width="32" height="32" rx="1" fill="#f39b1a"/><path d="M12 6L22 25M25 6L15 25" stroke="#fde6b8" stroke-width="2.2" fill="none"/><circle cx="11.5" cy="28" r="3.6" fill="none" stroke="#fde6b8" stroke-width="2.2"/><circle cx="25.5" cy="28" r="3.6" fill="none" stroke="#fde6b8" stroke-width="2.2"/></svg>
<svg class="i" style="left:1361px;top:159px" width="37" height="37" viewBox="0 0 37 37"><rect x="0.5" y="0.5" width="36" height="36" rx="3.5" fill="#6c6c6c"/><rect x="2.5" y="2.5" width="32" height="32" rx="1" fill="#6a6a6a"/><rect x="7" y="7" width="17" height="23" rx="2" fill="#c8c8c8"/><rect x="12" y="4.6" width="7" height="4" rx="1" fill="#d8d8d8"/><rect x="16" y="13" width="15" height="19" rx="2" fill="#707070" stroke="#c8c8c8" stroke-width="2"/></svg>
<svg class="i" style="left:1400px;top:159px" width="37" height="37" viewBox="0 0 37 37"><rect x="0.5" y="0.5" width="36" height="36" rx="3.5" fill="#6c6c6c"/><rect x="2.5" y="2.5" width="32" height="32" rx="1" fill="#f39b1a"/><path d="M9 9L28 28M28 9L9 28" stroke="#fff6e4" stroke-width="6"/></svg>
<svg class="i" style="left:1447px;top:159px" width="37" height="37" viewBox="0 0 37 37"><rect x="0.5" y="0.5" width="36" height="36" rx="3.5" fill="#6c6c6c"/><rect x="2.5" y="2.5" width="32" height="32" rx="1" fill="#1b9be8"/><path d="M5 5V27L10.4 22L14.6 31L18 29.4L13.8 21L21 20.6Z" fill="#fff"/></svg>
<svg class="i" style="left:1468px;top:160px" width="16" height="32" viewBox="0 0 16 32"><text x="2" y="26.6" font-family="Liberation Sans" font-size="30.5" fill="#fff" stroke="#fff" stroke-width="1.1" textLength="11.5" lengthAdjust="spacingAndGlyphs">?</text></svg>
<div style="left:989px;top:161px;width:1px;height:33px;background:#2e2e2e;"></div>
<div style="left:990px;top:161px;width:1px;height:33px;background:#4a4a4a;"></div>
<div style="left:1075px;top:161px;width:1px;height:33px;background:#2e2e2e;"></div>
<div style="left:1076px;top:161px;width:1px;height:33px;background:#4a4a4a;"></div>
<div style="left:1278px;top:161px;width:1px;height:33px;background:#2e2e2e;"></div>
<div style="left:1279px;top:161px;width:1px;height:33px;background:#4a4a4a;"></div>
<div style="left:1442px;top:161px;width:1px;height:33px;background:#2e2e2e;"></div>
<div style="left:1443px;top:161px;width:1px;height:33px;background:#4a4a4a;"></div>
<div style="left:1707px;top:158px;width:208px;height:38px;background:#000;"></div>
<span id="t76" class="t" style="top:163.0px;line-height:34px;font-size:28px;color:#27e227;font-family:'Liberation Mono',monospace;font-style:italic;left:1719px;letter-spacing:-1.303px;transform:scaleY(1.2);transform-origin:50% 58%;">+31#17:48:04</span>
<div style="left:907px;top:197px;width:224px;height:834px;background:#3a3a3a;"></div>
<div style="left:909px;top:199px;width:1px;height:832px;background:#4c4c4c;"></div>
<div style="left:911px;top:200px;width:214px;height:831px;background:#232323;"></div>
<div style="left:1125px;top:199px;width:1px;height:832px;background:#505050;"></div>
<div style="left:1128px;top:199px;width:1px;height:832px;background:#2a2a2a;"></div>
<div style="left:911px;top:200px;width:214px;height:24px;background:linear-gradient(#484848,#3a3a3a);border-top:1px solid #555;border-bottom:1px solid #2c2c2c;box-sizing:border-box;"></div>
<svg class="i" style="left:918px;top:207px;" width="9" height="11"><use href="#chev"/></svg>
<span id="t77" class="t" style="top:204.5px;line-height:15px;font-size:11px;color:#d8d8d8;left:934px;letter-spacing:-0.212px;">Rundown</span>
<div style="left:911px;top:225px;width:214px;height:22px;background:#3c3c3c;border-bottom:1px solid #333;box-sizing:border-box;"></div>
<span id="t78" class="t" style="top:228.5px;line-height:15px;font-size:11px;color:#d2d2d2;left:916px;letter-spacing:-0.184px;">Description</span>
<div style="left:988px;top:227px;width:133px;height:18px;background:#222;border:1px solid #595959;border-top-color:#1a1a1a;border-left-color:#1a1a1a;box-sizing:border-box;overflow:hidden;"></div>
<span id="t79" class="t" style="top:228.0px;line-height:16px;font-size:12px;color:#d0d0d0;left:989px;letter-spacing:-0.797px;">RUNDOWN ETERE SUPP</span>
<div style="left:911px;top:248px;width:214px;height:22px;background:#3c3c3c;border-bottom:1px solid #333;box-sizing:border-box;"></div>
<span id="t80" class="t" style="top:251.5px;line-height:15px;font-size:11px;color:#d2d2d2;left:916px;letter-spacing:-0.232px;">Sch Time</span>
<div style="left:988px;top:250px;width:133px;height:18px;background:#222;border:1px solid #595959;border-top-color:#1a1a1a;border-left-color:#1a1a1a;box-sizing:border-box;overflow:hidden;"></div>
<span id="t81" class="t" style="top:251.0px;line-height:16px;font-size:12px;color:#d0d0d0;right:796px;letter-spacing:-0.582px;">00:00:00.00</span>
<div style="left:911px;top:270px;width:214px;height:22px;background:#3c3c3c;border-bottom:1px solid #333;box-sizing:border-box;"></div>
<span id="t82" class="t" style="top:273.5px;line-height:15px;font-size:11px;color:#d2d2d2;left:916px;letter-spacing:-0.175px;">Sch Duration</span>
<div style="left:988px;top:272px;width:133px;height:18px;background:#222;border:1px solid #595959;border-top-color:#1a1a1a;border-left-color:#1a1a1a;box-sizing:border-box;overflow:hidden;"></div>
<span id="t83" class="t" style="top:273.0px;line-height:16px;font-size:12px;color:#d0d0d0;right:796px;letter-spacing:-0.606px;">0000:00.00</span>
<div style="left:911px;top:292px;width:214px;height:22px;background:#3c3c3c;border-bottom:1px solid #333;box-sizing:border-box;"></div>
<span id="t84" class="t" style="top:295.5px;line-height:15px;font-size:11px;color:#d2d2d2;left:916px;letter-spacing:-0.213px;">External code</span>
<div style="left:988px;top:294px;width:133px;height:18px;background:#222;border:1px solid #595959;border-top-color:#1a1a1a;border-left-color:#1a1a1a;box-sizing:border-box;overflow:hidden;"></div>
<div style="left:911px;top:315px;width:214px;height:24px;background:linear-gradient(#484848,#3a3a3a);border-top:1px solid #555;border-bottom:1px solid #2c2c2c;box-sizing:border-box;"></div>
<svg class="i" style="left:918px;top:322px;" width="9" height="11"><use href="#chev"/></svg>
<span id="t85" class="t" style="top:319.5px;line-height:15px;font-size:11px;color:#d8d8d8;left:934px;letter-spacing:0.065px;">Story</span>
<div style="left:911px;top:340px;width:214px;height:22px;background:#3c3c3c;border-bottom:1px solid #333;box-sizing:border-box;"></div>
<span id="t86" class="t" style="top:343.5px;line-height:15px;font-size:11px;color:#d2d2d2;left:916px;letter-spacing:-0.184px;">Description</span>
<div style="left:988px;top:342px;width:133px;height:18px;background:#222;border:1px solid #595959;border-top-color:#1a1a1a;border-left-color:#1a1a1a;box-sizing:border-box;overflow:hidden;"></div>
<span id="t87" class="t" style="top:343.5px;line-height:15px;font-size:11px;color:#7a7a7a;left:989px;letter-spacing:-0.173px;">Market Wrap: Is Bitcoin Bre</span>
<div style="left:911px;top:363px;width:214px;height:22px;background:#3c3c3c;border-bottom:1px solid #333;box-sizing:border-box;"></div>
<span id="t88" class="t" style="top:366.5px;line-height:15px;font-size:11px;color:#d2d2d2;left:916px;letter-spacing:-0.175px;">Sch Duration</span>
<div style="left:988px;top:365px;width:133px;height:18px;background:#222;border:1px solid #595959;border-top-color:#1a1a1a;border-left-color:#1a1a1a;box-sizing:border-box;overflow:hidden;"></div>
<span id="t89" class="t" style="top:366.0px;line-height:16px;font-size:12px;color:#d0d0d0;right:796px;letter-spacing:-0.606px;">0000:00.00</span>
<div style="left:911px;top:386px;width:214px;height:2px;background:#3c3c3c;"></div>
<div style="left:1131px;top:199px;width:784px;height:832px;background:#303030;"></div>
<div style="left:1131px;top:199px;width:1px;height:832px;background:#5a5a5a;"></div>
<div id="grid" style="left:1132px;top:202px;width:1778px;height:829px;overflow:hidden">
<div style="left:-1132px;top:-202px;width:1915px;height:1031px">
<div style="left:1192px;top:203px;width:701px;height:50px;background:linear-gradient(#fbdcfb 0,#f7c5f9 1.5px,#f3c0f5 10%,#d8a4da 52%,#bd88be 90%,#b783b7 100%);box-shadow:0 1.7px 0 #2b1a31;"></div>
<svg class="i" style="left:1213px;top:214.0px;" width="28" height="28"><use href="#smiley"/></svg>
<span id="t90" class="t" style="top:220.5px;line-height:15px;font-size:11px;color:#1d0a24;left:1245px;letter-spacing:0.216px;">01:08:18.01</span>
<span id="t91" class="t" style="top:220.5px;line-height:15px;font-size:11px;color:#1d0a24;left:1373.3px;letter-spacing:-0.775px;">HEADLINE NEWS</span>
<span id="t92" class="t" style="top:220.5px;line-height:15px;font-size:11px;color:#1d0a24;left:1573px;letter-spacing:0.144px;">0001:36.00</span>
<svg class="i" style="left:1656px;top:212px;" width="32" height="32"><use href="#chk"/></svg>
<div style="left:1842px;top:204px;width:51px;height:30px;overflow:hidden">
<span class="t" style="left:2px;top:1px;line-height:14px;font-size:11px;color:#1d0a24;letter-spacing:0.1px;"></span>
<span class="t" style="left:2.3px;top:14px;line-height:14px;font-size:11px;color:#1d0a24;letter-spacing:0.1px;">-22:51:41</span>
</div>
<div style="left:1693px;top:204px;width:48px;height:48px;background:#31e431;"></div>
<div style="left:1693px;top:204px;width:2px;height:48px;background:#86ee86;"></div>
<div style="left:1739px;top:204px;width:2px;height:48px;background:#86ee86;"></div>
<div style="left:1695px;top:204px;width:44px;height:41px;background:#efefef;"></div>
<svg class="i" style="left:1695px;top:201px" width="44" height="44" viewBox="0 0 44 38" preserveAspectRatio="none"><rect width="44" height="38" fill="#eeeeec"/><path d="M9 38Q10 31 17 30L22 32L27 30Q34 31 35 38Z" fill="#fbfbfb" stroke="#d8d8d8" stroke-width="0.6"/><path d="M13.4 38L14 33.4M30.6 38L30 33.4" stroke="#cf3a34" stroke-width="1"/><rect x="19" y="24" width="6" height="7" fill="#c9a48e"/><ellipse cx="22" cy="15.4" rx="6.3" ry="10.6" fill="#d8b6a2"/><path d="M15.2 16Q13.6 2.6 22 2.4Q30.4 2.6 28.8 16Q28.4 8.6 22 8.2Q15.6 8.6 15.2 16Z" fill="#aaa39c"/><path d="M18.2 14.6h2.6M23.2 14.6h2.6" stroke="#5c4238" stroke-width="1.2"/><path d="M22 16v4.4" stroke="#b08c78" stroke-width="1.2"/><path d="M20 22.6h4" stroke="#70392e" stroke-width="1.4"/></svg>
<div style="left:1695px;top:245px;width:44px;height:7px;background:#2dbf3a;"></div>
<div style="left:1741px;top:204px;width:48px;height:48px;background:#31e431;"></div>
<svg class="i" style="left:1743px;top:216px" width="44" height="24" viewBox="0 0 44 23" preserveAspectRatio="none"><rect width="44" height="23" fill="#141414"/><path d="M2 6Q4 3 10 3H28Q33 3 34 8V17H3Z" fill="#4a4a4a"/><path d="M6 9Q16 5 30 9L28 16Q17 18 8 15Z" fill="#8c8c8c"/><path d="M10 11Q18 8 27 11" stroke="#ddd" stroke-width="1.6" fill="none"/><rect x="36" y="2" width="7" height="16" fill="#2c2c2c"/><path d="M27 0L34 0L36 12L30 10Z" fill="#050505"/></svg>
<div style="left:1743px;top:240px;width:44px;height:12px;background:#2dbf3a;"></div>
<div style="left:1693px;top:236px;width:16px;height:16px;background:#f4f4f4;"></div>
<svg class="i" style="left:1693.5px;top:236px;" width="15" height="15"><use href="#smiley"/></svg>
<div style="left:1741px;top:236px;width:16px;height:16px;background:#f4f4f4;"></div>
<svg class="i" style="left:1741.5px;top:236px;" width="15" height="15"><use href="#smiley"/></svg>
<div style="left:1192px;top:255px;width:701px;height:50px;background:linear-gradient(#fbdcfb 0,#f7c5f9 1.5px,#f3c0f5 10%,#d8a4da 52%,#bd88be 90%,#b783b7 100%);box-shadow:0 1.7px 0 #2b1a31;"></div>
<span id="t95" class="t" style="top:256.5px;line-height:15px;font-size:11px;color:#1d0a24;left:1194px;">2</span>
<svg class="i" style="left:1213px;top:266.0px;" width="28" height="28"><use href="#smiley"/></svg>
<span id="t96" class="t" style="top:272.5px;line-height:15px;font-size:11px;color:#1d0a24;left:1245px;letter-spacing:0.216px;">01:08:54.13</span>
<span id="t97" class="t" style="top:256.5px;line-height:15px;font-size:11px;color:#1d0a24;left:1373.3px;letter-spacing:-0.168px;">War in Ukraine hurts millions worldwide</span>
<span id="t98" class="t" style="top:269.5px;line-height:15px;font-size:11px;color:#1d0a24;left:1373.3px;letter-spacing:-0.010px;">as prices soar, U.N. reports</span>
<span id="t99" class="t" style="top:272.5px;line-height:15px;font-size:11px;color:#1d0a24;left:1573px;letter-spacing:0.144px;">0001:38.01</span>
<svg class="i" style="left:1656px;top:264px;" width="32" height="32"><use href="#chk"/></svg>
<div style="left:1842px;top:256px;width:51px;height:30px;overflow:hidden">
<span class="t" style="left:2px;top:1px;line-height:14px;font-size:11px;color:#1d0a24;letter-spacing:0.1px;">00:01:36.0</span>
<span class="t" style="left:2.3px;top:14px;line-height:14px;font-size:11px;color:#1d0a24;letter-spacing:0.1px;">-22:52:41</span>
</div>
<div style="left:1693px;top:256px;width:96px;height:48px;background:#31e431;"></div>
<svg class="i" style="left:1695px;top:267px" width="44" height="25" viewBox="0 0 44 23" preserveAspectRatio="none"><rect width="44" height="23" fill="#141414"/><path d="M2 6Q4 3 10 3H28Q33 3 34 8V17H3Z" fill="#4a4a4a"/><path d="M6 9Q16 5 30 9L28 16Q17 18 8 15Z" fill="#8c8c8c"/><path d="M10 11Q18 8 27 11" stroke="#ddd" stroke-width="1.6" fill="none"/><rect x="36" y="2" width="7" height="16" fill="#2c2c2c"/><path d="M27 0L34 0L36 12L30 10Z" fill="#050505"/></svg>
<div style="left:1695px;top:292px;width:44px;height:12px;background:#2dbf3a;"></div>
<div style="left:1743px;top:262px;width:44px;height:35px;background:#efefef;"></div>
<svg class="i" style="left:1743px;top:262px" width="44" height="35" viewBox="0 0 44 38" preserveAspectRatio="none"><rect width="44" height="38" fill="#eeeeec"/><path d="M9 38Q10 31 17 30L22 32L27 30Q34 31 35 38Z" fill="#fbfbfb" stroke="#d8d8d8" stroke-width="0.6"/><path d="M13.4 38L14 33.4M30.6 38L30 33.4" stroke="#cf3a34" stroke-width="1"/><rect x="19" y="24" width="6" height="7" fill="#c9a48e"/><ellipse cx="22" cy="15.4" rx="6.3" ry="10.6" fill="#d8b6a2"/><path d="M15.2 16Q13.6 2.6 22 2.4Q30.4 2.6 28.8 16Q28.4 8.6 22 8.2Q15.6 8.6 15.2 16Z" fill="#aaa39c"/><path d="M18.2 14.6h2.6M23.2 14.6h2.6" stroke="#5c4238" stroke-width="1.2"/><path d="M22 16v4.4" stroke="#b08c78" stroke-width="1.2"/><path d="M20 22.6h4" stroke="#70392e" stroke-width="1.4"/></svg>
<div style="left:1743px;top:297px;width:44px;height:7px;background:#2dbf3a;"></div>
<div style="left:1740px;top:256px;width:2px;height:48px;background:#86ee86;opacity:.5;"></div>
<div style="left:1741px;top:288px;width:16px;height:16px;background:#f4f4f4;"></div>
<svg class="i" style="left:1741.5px;top:288px;" width="15" height="15"><use href="#smiley"/></svg>
<div style="left:1192px;top:307px;width:701px;height:50px;background:linear-gradient(#fbdcfb 0,#f7c5f9 1.5px,#f3c0f5 10%,#d8a4da 52%,#bd88be 90%,#b783b7 100%);box-shadow:0 1.7px 0 #2b1a31;"></div>
<span id="t102" class="t" style="top:308.5px;line-height:15px;font-size:11px;color:#1d0a24;left:1194px;">3</span>
<svg class="i" style="left:1218px;top:321.0px" width="20" height="22"><path d="M1 1V21L19.5 11Z" fill="#0d8a12" stroke="#0a5c0c" stroke-width="0.8"/></svg>
<span id="t103" class="t" style="top:324.5px;line-height:15px;font-size:11px;color:#1d0a24;left:1245px;letter-spacing:0.216px;">01:09:42.12</span>
<span id="t104" class="t" style="top:308.5px;line-height:15px;font-size:11px;color:#1d0a24;left:1373.3px;letter-spacing:-0.039px;">Morto il filosofo Humberto Maturana,</span>
<span id="t105" class="t" style="top:321.5px;line-height:15px;font-size:11px;color:#1d0a24;left:1373.3px;letter-spacing:-0.089px;">teorico dell'autopoiesi o autocreazione</span>
<span id="t106" class="t" style="top:324.5px;line-height:15px;font-size:11px;color:#1d0a24;left:1573px;letter-spacing:0.144px;">0002:44.09</span>
<svg class="i" style="left:1656px;top:316px;" width="32" height="32"><use href="#chk"/></svg>
<div style="left:1842px;top:308px;width:51px;height:30px;overflow:hidden">
<span class="t" style="left:2px;top:1px;line-height:14px;font-size:11px;color:#1d0a24;letter-spacing:0.1px;">00:03:14.0</span>
<span class="t" style="left:2.3px;top:14px;line-height:14px;font-size:11px;color:#1d0a24;letter-spacing:0.1px;">-22:53:31</span>
</div>
<div style="left:1192px;top:307px;width:179px;height:50px;background:linear-gradient(#fffaf2 0,#f6e8d6 35%,#e2c39c 80%,#d8b489 100%);box-shadow:0 1.7px 0 #2b1a31;"></div>
<span id="t109" class="t" style="top:308.5px;line-height:15px;font-size:11px;color:#1d0a24;left:1194px;">3</span>
<svg class="i" style="left:1218px;top:321px" width="20" height="22"><path d="M1 1V21L19.5 11Z" fill="#0d8a12" stroke="#0a5c0c" stroke-width="0.8"/></svg>
<span id="t110" class="t" style="top:324.5px;line-height:15px;font-size:11px;color:#1d0a24;left:1245px;letter-spacing:0.216px;">01:09:42.12</span>
<div style="left:1693px;top:308px;width:149px;height:48px;background:#31e431;"></div>
<svg class="i" style="left:1695px;top:318px" width="44" height="28" viewBox="0 0 44 28"><rect width="44" height="28" fill="#030303"/><circle cx="23" cy="14" r="11.6" fill="url(#gjup)"/><path d="M12.4 10.5H33.6M11.6 15H34.4M13 19H33" stroke="#a58c6c" stroke-width="1.3" opacity="0.75"/></svg>
<div style="left:1695px;top:346px;width:44px;height:10px;background:#2dbf3a;"></div>
<svg class="i" style="left:1743px;top:317px" width="44" height="30" viewBox="0 0 44 30" preserveAspectRatio="none"><rect width="44" height="30" fill="#030303"/><circle cx="8" cy="7.9" r="6.3" fill="url(#gmars)"/><circle cx="26.5" cy="7.9" r="6.3" fill="url(#gmars)"/><circle cx="17.5" cy="21.7" r="6.3" fill="url(#gmars)"/><circle cx="35.6" cy="21.7" r="6.3" fill="url(#gmars)"/></svg>
<div style="left:1743px;top:347px;width:44px;height:9px;background:#2dbf3a;"></div>
<svg class="i" style="left:1791px;top:318px" width="44" height="28" viewBox="0 0 44 28"><rect width="44" height="28" fill="#030303"/><circle cx="23" cy="14" r="11.6" fill="url(#gjup)"/><path d="M12.4 10.5H33.6M11.6 15H34.4M13 19H33" stroke="#a58c6c" stroke-width="1.3" opacity="0.75"/></svg>
<div style="left:1791px;top:346px;width:44px;height:10px;background:#2dbf3a;"></div>
<div style="left:1740px;top:308px;width:2px;height:48px;background:#86ee86;opacity:.45;"></div>
<div style="left:1788px;top:308px;width:2px;height:48px;background:#86ee86;opacity:.45;"></div>
<div style="left:1839.5px;top:315px;width:2.5px;height:32px;background:#0a0a0a;"></div>
<div style="left:1693px;top:340px;width:16px;height:16px;background:#f4f4f4;"></div>
<div style="left:1696px;top:342px;width:5px;height:13px;background:linear-gradient(90deg,#0a0a8c,#1818d8);"></div>
<div style="left:1702px;top:342px;width:5px;height:13px;background:linear-gradient(90deg,#0a0a8c,#1818d8);"></div>
<div style="left:1192px;top:359px;width:701px;height:50px;background:linear-gradient(#fbdcfb 0,#f7c5f9 1.5px,#f3c0f5 10%,#d8a4da 52%,#bd88be 90%,#b783b7 100%);box-shadow:0 1.7px 0 #2b1a31;"></div>
<span id="t111" class="t" style="top:360.5px;line-height:15px;font-size:11px;color:#1d0a24;left:1194px;">4</span>
<span id="t112" class="t" style="top:376.5px;line-height:15px;font-size:11px;color:#1d0a24;left:1213px;letter-spacing:0.216px;">01:12:26.21</span>
<span id="t113" class="t" style="top:376.5px;line-height:15px;font-size:11px;color:#1d0a24;left:1373.3px;letter-spacing:-0.331px;">The NASA Probe Named Parker</span>
<span id="t114" class="t" style="top:376.5px;line-height:15px;font-size:11px;color:#1d0a24;left:1573px;letter-spacing:0.144px;">0031:13.13</span>
<svg class="i" style="left:1656px;top:368px;" width="32" height="32"><use href="#chk"/></svg>
<div style="left:1842px;top:360px;width:51px;height:30px;overflow:hidden">
<span class="t" style="left:2px;top:1px;line-height:14px;font-size:11px;color:#1d0a24;letter-spacing:0.1px;">00:05:58.</span>
<span class="t" style="left:2.3px;top:14px;line-height:14px;font-size:11px;color:#1d0a24;letter-spacing:0.1px;">-22:53:31</span>
</div>
<div style="left:1693px;top:360px;width:149px;height:48px;background:#31e431;"></div>
<svg class="i" style="left:1700px;top:362px" width="34" height="44" viewBox="0 0 34 44" preserveAspectRatio="none"><rect width="34" height="44" fill="#1a1a1a"/><rect y="28" width="34" height="16" fill="#9c9c9c"/><path d="M0 30Q8 27 16 29T34 28V32H0Z" fill="#7a7a7a"/><path d="M0 38Q10 35 20 38T34 37V44H0Z" fill="#b2b2b2"/><path d="M5 28L9 17L13 9L18 5L24 8L25 15L29 20L31 30L24 33L17 30L11 32Z" fill="#6e6e6e"/><path d="M14 8L18 5L23 8L22 14L17 16L13 13Z" fill="#efefef"/><path d="M10 20L14 16L16 22L12 26ZM19 17L24 16L25 22L21 25ZM14 25L19 24L20 30L15 30ZM24 24L28 22L30 29L26 30Z" fill="#e4e4e4"/><path d="M2 24L13 12" stroke="#d0d0d0" stroke-width="0.9"/><path d="M8 29L12 21M22 31L20 24M27 31L28 25" stroke="#fafafa" stroke-width="1.2"/><g fill="#dcdcdc"><rect x="4" y="12" width="1.2" height="1.2"/><rect x="26" y="10" width="1.2" height="1.2"/><rect x="7" y="6" width="1" height="1"/><rect x="29" y="16" width="1" height="1"/></g><g fill="#c8c8c8"><rect x="3" y="34" width="2" height="1"/><rect x="12" y="36" width="3" height="1"/><rect x="22" y="35" width="2" height="1"/><rect x="28" y="40" width="3" height="1"/><rect x="8" y="41" width="2" height="1"/></g></svg>
<svg class="i" style="left:1743.5px;top:362px" width="44" height="44" viewBox="0 0 44 44" preserveAspectRatio="none"><rect width="44" height="44" fill="#1ea0e6"/><path d="M10.4 2.9L17.5 10.4M33 2.9L26.7 10.4" stroke="#e4f4ff" stroke-width="2" stroke-linecap="round"/><rect x="16.7" y="9.6" width="10.4" height="5.4" rx="1" fill="#dceefa"/><rect x="5.2" y="16.5" width="33.8" height="22.1" rx="6.5" fill="none" stroke="#f2faff" stroke-width="3.8"/><path d="M11 41.6H33" stroke="#e4f4ff" stroke-width="1.6" stroke-linecap="round"/><text x="9.4" y="34.6" font-family="Liberation Sans" font-weight="700" font-size="18" fill="#f4fbff" textLength="24.6" lengthAdjust="spacingAndGlyphs">Live</text></svg>
<svg class="i" style="left:1791px;top:366px" width="44" height="35" viewBox="0 0 44 34" preserveAspectRatio="none"><rect width="44" height="34" fill="#050403"/><ellipse cx="17" cy="17" rx="4.6" ry="6.6" fill="#4a342b"/><path d="M12 15Q13 8 18 9Q22 9 22 15Q19 11 15 12Z" fill="#150e0b"/><ellipse cx="33" cy="16" rx="4.4" ry="8" fill="#33231d"/><path d="M12 26Q17 22 23 27L23 34H10Z" fill="#1c1411"/><ellipse cx="16" cy="15.6" rx="1" ry="0.7" fill="#8a6a5c"/></svg>
<div style="left:1791px;top:401px;width:44px;height:7px;background:#2dbf3a;"></div>
<div style="left:1839px;top:370px;width:3px;height:27px;background:#0a0a0a;"></div>
<div style="left:1740px;top:360px;width:2px;height:48px;background:#86ee86;opacity:.45;"></div>
<div style="left:1788px;top:360px;width:2px;height:48px;background:#86ee86;opacity:.45;"></div>
<div style="left:1171px;top:411px;width:722px;height:38px;background:linear-gradient(#5647a8 0,#4a3d94 40%,#3a3072 100%);box-shadow:0 1.7px 0 #1d1736;"></div>
<div style="left:1171px;top:411px;width:24px;height:38px;background:linear-gradient(90deg,rgba(48,48,48,.55),rgba(48,48,48,0));"></div>
<svg class="i" style="left:1140.5px;top:421.5px;" width="16" height="16"><use href="#sect"/></svg>
<span id="t117" class="t" style="top:422.8px;line-height:15.5px;font-size:11.5px;color:#f1efff;font-weight:700;left:1214px;letter-spacing:0.270px;">01:43:40.09</span>
<span id="t118" class="t" style="top:422.8px;line-height:15.5px;font-size:11.5px;color:#f1efff;font-weight:700;left:1374px;letter-spacing:-0.129px;">POLITICS</span>
<span id="t119" class="t" style="top:422.8px;line-height:15.5px;font-size:11.5px;color:#f1efff;font-weight:700;left:1574px;letter-spacing:0.380px;">0000:07.09</span>
<div style="left:1842px;top:411px;width:51px;height:38px;overflow:hidden">
<span class="t" style="left:2px;top:2px;line-height:14px;font-size:11.5px;font-weight:700;color:#f1efff;letter-spacing:0.2px">00:37:11.</span>
<span class="t" style="left:2px;top:15px;line-height:14px;font-size:11.5px;font-weight:700;color:#f1efff;letter-spacing:0.2px">-22:53:31</span>
</div>
<div style="left:1192px;top:450px;width:701px;height:50px;background:linear-gradient(#ffff30 0,#fcfc00 2px,#f0f000 30%,#cfcf00 70%,#b6b600 100%);box-shadow:0 1.7px 0 #2a2600;"></div>
<span id="t120" class="t" style="top:451.5px;line-height:15px;font-size:11px;color:#1a1a00;left:1194px;">5</span>
<span id="t121" class="t" style="top:467.5px;line-height:15px;font-size:11px;color:#1a1a00;left:1213px;letter-spacing:0.216px;">01:43:40.09</span>
<span id="t122" class="t" style="top:467.5px;line-height:15px;font-size:11px;color:#1a1a00;left:1373.3px;letter-spacing:-0.310px;">_Break</span>
<span id="t123" class="t" style="top:467.5px;line-height:15px;font-size:11px;color:#1a1a00;left:1573px;letter-spacing:0.144px;">0000:00.00</span>
<svg class="i" style="left:1656px;top:459px;" width="32" height="32"><use href="#chk"/></svg>
<div style="left:1842px;top:451px;width:51px;height:30px;overflow:hidden">
<span class="t" style="left:2px;top:1px;line-height:14px;font-size:11px;color:#1a1a00;letter-spacing:0.1px;">00:37:11.</span>
<span class="t" style="left:2.3px;top:14px;line-height:14px;font-size:11px;color:#1a1a00;letter-spacing:0.1px;">-22:53:31</span>
</div>
<div style="left:1192px;top:502px;width:701px;height:50px;background:linear-gradient(#fbdcfb 0,#f7c5f9 1.5px,#f3c0f5 10%,#d8a4da 52%,#bd88be 90%,#b783b7 100%);box-shadow:0 1.7px 0 #2b1a31;"></div>
<span id="t126" class="t" style="top:503.5px;line-height:15px;font-size:11px;color:#1d0a24;left:1194px;">6</span>
<span id="t127" class="t" style="top:519.5px;line-height:15px;font-size:11px;color:#1d0a24;left:1213px;letter-spacing:0.216px;">01:43:40.09</span>
<span id="t128" class="t" style="top:503.5px;line-height:15px;font-size:11px;color:#1d0a24;left:1373.3px;letter-spacing:-0.169px;">Vaccini: governo Gb pensa ad obbligo</span>
<span id="t129" class="t" style="top:516.5px;line-height:15px;font-size:11px;color:#1d0a24;left:1373.3px;letter-spacing:-0.126px;">per personale Sanità</span>
<span id="t130" class="t" style="top:519.5px;line-height:15px;font-size:11px;color:#1d0a24;left:1573px;letter-spacing:0.144px;">0000:03.06</span>
<svg class="i" style="left:1656px;top:511px;" width="32" height="32"><use href="#chk"/></svg>
<div style="left:1842px;top:503px;width:51px;height:30px;overflow:hidden">
<span class="t" style="left:2px;top:1px;line-height:14px;font-size:11px;color:#1d0a24;letter-spacing:0.1px;">00:37:11.</span>
<span class="t" style="left:2.3px;top:14px;line-height:14px;font-size:11px;color:#1d0a24;letter-spacing:0.1px;">-22:53:31</span>
</div>
<svg class="i" style="left:1693px;top:503px;" width="48" height="48"><use href="#film"/></svg>
<div style="left:1192px;top:554px;width:701px;height:42px;background:linear-gradient(#3b3b3b 0,#2e2e2e 45%,#1c1c1c 100%);box-shadow:0 1.7px 0 #141414;"></div>
<span id="t133" class="t" style="top:555.5px;line-height:15px;font-size:11px;color:#d088d0;left:1194px;">7</span>
<span id="t134" class="t" style="top:567.5px;line-height:15px;font-size:11px;color:#d088d0;left:1213px;letter-spacing:0.216px;">01:43:43.15</span>
<span id="t135" class="t" style="top:555.5px;line-height:15px;font-size:11px;color:#d088d0;left:1373.3px;letter-spacing:0.088px;">Indonesia: traghetto a fuoco, salve 274</span>
<span id="t136" class="t" style="top:568.5px;line-height:15px;font-size:11px;color:#d088d0;left:1373.3px;letter-spacing:-0.087px;">persone, un disperso</span>
<span id="t137" class="t" style="top:567.5px;line-height:15px;font-size:11px;color:#d088d0;left:1573px;letter-spacing:0.144px;">0000:00.01</span>
<svg class="i" style="left:1656px;top:559px;" width="32" height="32"><use href="#chk"/></svg>
<div style="left:1842px;top:555px;width:51px;height:30px;overflow:hidden">
<span class="t" style="left:2px;top:1px;line-height:14px;font-size:11px;color:#d088d0;letter-spacing:0.1px;">00:37:15.0</span>
<span class="t" style="left:2.3px;top:14px;line-height:14px;font-size:11px;color:#d088d0;letter-spacing:0.1px;">-22:53:31</span>
</div>
<div style="left:1192px;top:598px;width:701px;height:50px;background:linear-gradient(#fbdcfb 0,#f7c5f9 1.5px,#f3c0f5 10%,#d8a4da 52%,#bd88be 90%,#b783b7 100%);box-shadow:0 1.7px 0 #2b1a31;"></div>
<span id="t140" class="t" style="top:599.5px;line-height:15px;font-size:11px;color:#1d0a24;left:1194px;">8</span>
<span id="t141" class="t" style="top:615.5px;line-height:15px;font-size:11px;color:#1d0a24;left:1213px;letter-spacing:0.216px;">01:43:43.16</span>
<span id="t142" class="t" style="top:599.5px;line-height:15px;font-size:11px;color:#1d0a24;left:1373.3px;letter-spacing:-0.211px;">Colombia: Onu chiede inchiesta</span>
<span id="t143" class="t" style="top:612.5px;line-height:15px;font-size:11px;color:#1d0a24;left:1373.3px;letter-spacing:-0.057px;">indipendente su fatti Cali</span>
<span id="t144" class="t" style="top:615.5px;line-height:15px;font-size:11px;color:#1d0a24;left:1573px;letter-spacing:0.144px;">0000:04.01</span>
<svg class="i" style="left:1656px;top:607px;" width="32" height="32"><use href="#chk"/></svg>
<div style="left:1842px;top:599px;width:51px;height:30px;overflow:hidden">
<span class="t" style="left:2px;top:1px;line-height:14px;font-size:11px;color:#1d0a24;letter-spacing:0.1px;">00:37:15.0</span>
<span class="t" style="left:2.3px;top:14px;line-height:14px;font-size:11px;color:#1d0a24;letter-spacing:0.1px;">-22:53:31</span>
</div>
<svg class="i" style="left:1693px;top:599px;" width="48" height="48"><use href="#film"/></svg>
<div style="left:1192px;top:650px;width:701px;height:42px;background:linear-gradient(#3b3b3b 0,#2e2e2e 45%,#1c1c1c 100%);box-shadow:0 1.7px 0 #141414;"></div>
<span id="t147" class="t" style="top:651.5px;line-height:15px;font-size:11px;color:#d088d0;left:1194px;">9</span>
<span id="t148" class="t" style="top:663.5px;line-height:15px;font-size:11px;color:#d088d0;left:1213px;letter-spacing:0.216px;">01:43:47.17</span>
<span id="t149" class="t" style="top:651.5px;line-height:15px;font-size:11px;color:#d088d0;left:1373.3px;letter-spacing:-0.072px;">Johnson, Gb avrà una nuova 'nave</span>
<span id="t150" class="t" style="top:664.5px;line-height:15px;font-size:11px;color:#d088d0;left:1373.3px;letter-spacing:-0.288px;">ammiraglia nazionale'</span>
<span id="t151" class="t" style="top:663.5px;line-height:15px;font-size:11px;color:#d088d0;left:1573px;letter-spacing:0.144px;">0000:00.01</span>
<svg class="i" style="left:1656px;top:655px;" width="32" height="32"><use href="#chk"/></svg>
<div style="left:1842px;top:651px;width:51px;height:30px;overflow:hidden">
<span class="t" style="left:2px;top:1px;line-height:14px;font-size:11px;color:#d088d0;letter-spacing:0.1px;">00:37:19.0</span>
<span class="t" style="left:2.3px;top:14px;line-height:14px;font-size:11px;color:#d088d0;letter-spacing:0.1px;">-22:53:31</span>
</div>
<div style="left:1171px;top:694px;width:722px;height:38px;background:linear-gradient(#5647a8 0,#4a3d94 40%,#3a3072 100%);box-shadow:0 1.7px 0 #1d1736;"></div>
<div style="left:1171px;top:694px;width:24px;height:38px;background:linear-gradient(90deg,rgba(48,48,48,.55),rgba(48,48,48,0));"></div>
<svg class="i" style="left:1140.5px;top:704.5px;" width="16" height="16"><use href="#sect"/></svg>
<span id="t154" class="t" style="top:705.8px;line-height:15.5px;font-size:11.5px;color:#f1efff;font-weight:700;left:1214px;letter-spacing:0.270px;">01:43:47.18</span>
<span id="t155" class="t" style="top:705.8px;line-height:15.5px;font-size:11.5px;color:#f1efff;font-weight:700;left:1374px;letter-spacing:-0.775px;">ECONOMY</span>
<span id="t156" class="t" style="top:705.8px;line-height:15.5px;font-size:11.5px;color:#f1efff;font-weight:700;left:1574px;letter-spacing:0.380px;">0012:15.18</span>
<div style="left:1842px;top:694px;width:51px;height:38px;overflow:hidden">
<span class="t" style="left:2px;top:2px;line-height:14px;font-size:11.5px;font-weight:700;color:#f1efff;letter-spacing:0.2px">00:37:19.</span>
<span class="t" style="left:2px;top:15px;line-height:14px;font-size:11.5px;font-weight:700;color:#f1efff;letter-spacing:0.2px">-22:53:31</span>
</div>
<div style="left:1192px;top:733px;width:701px;height:63px;background:linear-gradient(#fbdcfb 0,#f7c5f9 1.5px,#f3c0f5 10%,#d8a4da 52%,#bd88be 90%,#b783b7 100%);box-shadow:0 1.7px 0 #2b1a31;"></div>
<span id="t157" class="t" style="top:734.5px;line-height:15px;font-size:11px;color:#1d0a24;left:1194px;">10</span>
<span id="t158" class="t" style="top:757.5px;line-height:15px;font-size:11px;color:#1d0a24;left:1213px;letter-spacing:0.216px;">01:43:47.18</span>
<span id="t159" class="t" style="top:734.5px;line-height:15px;font-size:11px;color:#1d0a24;left:1373.3px;letter-spacing:0.015px;">First Mover Asia: Crypto’s Institutional</span>
<span id="t160" class="t" style="top:747.5px;line-height:15px;font-size:11px;color:#1d0a24;left:1373.3px;letter-spacing:-0.117px;">Future May Be Incompatible With</span>
<span id="t161" class="t" style="top:760.5px;line-height:15px;font-size:11px;color:#1d0a24;left:1373.3px;letter-spacing:-0.100px;">Litecoin’s Privacy Protecting Features;</span>
<span id="t162" class="t" style="top:773.5px;line-height:15px;font-size:11px;color:#1d0a24;left:1373.3px;letter-spacing:-0.331px;">Bitcoin Falls</span>
<span id="t163" class="t" style="top:757.5px;line-height:15px;font-size:11px;color:#1d0a24;left:1573px;letter-spacing:0.144px;">0000:46.01</span>
<svg class="i" style="left:1656px;top:749px;" width="32" height="32"><use href="#chk"/></svg>
<div style="left:1842px;top:734px;width:51px;height:30px;overflow:hidden">
<span class="t" style="left:2px;top:1px;line-height:14px;font-size:11px;color:#1d0a24;letter-spacing:0.1px;">00:37:19.0</span>
<span class="t" style="left:2.3px;top:14px;line-height:14px;font-size:11px;color:#1d0a24;letter-spacing:0.1px;">-22:53:31</span>
</div>
<svg class="i" style="left:1693px;top:734px;" width="52" height="52"><use href="#film"/></svg>
<div style="left:1192px;top:798px;width:701px;height:62px;background:linear-gradient(#74acf6 0,#6096e4 45%,#4a76c0 100%);box-shadow:0 1.7px 0 #0e1c3a;"></div>
<div style="left:1193px;top:799px;width:699px;height:60px;border:1px solid #0c2a5c;box-sizing:border-box;"></div>
<span id="t166" class="t" style="top:801.5px;line-height:15px;font-size:11px;color:#0a1a3a;left:1197px;">11</span>
<span id="t167" class="t" style="top:822.5px;line-height:15px;font-size:11px;color:#0a1a3a;left:1213px;letter-spacing:0.216px;">01:44:33.19</span>
<span id="t168" class="t" style="top:801.5px;line-height:15px;font-size:11px;color:#0a1a3a;left:1373.3px;letter-spacing:-0.139px;">Market Wrap: Is Bitcoin Breaking Down</span>
<span id="t169" class="t" style="top:814.5px;line-height:15px;font-size:11px;color:#0a1a3a;left:1373.3px;letter-spacing:-0.256px;">or Breaking Free?</span>
<span id="t170" class="t" style="top:822.5px;line-height:15px;font-size:11px;color:#0a1a3a;left:1573px;letter-spacing:0.225px;">0011:29.17</span>
<svg class="i" style="left:1656px;top:814px;" width="32" height="32"><use href="#chk"/></svg>
<div style="left:1842px;top:801px;width:51px;height:30px;overflow:hidden">
<span class="t" style="left:2px;top:1px;line-height:14px;font-size:11px;color:#0a1a3a;letter-spacing:0.1px;">00:38:05.0</span>
<span class="t" style="left:2.3px;top:14px;line-height:14px;font-size:11px;color:#0a1a3a;letter-spacing:0.1px;">-22:53:31</span>
</div>
<div style="left:1693px;top:801px;width:52px;height:52px;background:#31e431;"></div>
<div style="left:1695px;top:808px;width:48px;height:39px;background:#efefef;"></div>
<svg class="i" style="left:1695px;top:808px" width="48" height="39" viewBox="0 0 44 38" preserveAspectRatio="none"><rect width="44" height="38" fill="#eeeeec"/><path d="M9 38Q10 31 17 30L22 32L27 30Q34 31 35 38Z" fill="#fbfbfb" stroke="#d8d8d8" stroke-width="0.6"/><path d="M13.4 38L14 33.4M30.6 38L30 33.4" stroke="#cf3a34" stroke-width="1"/><rect x="19" y="24" width="6" height="7" fill="#c9a48e"/><ellipse cx="22" cy="15.4" rx="6.3" ry="10.6" fill="#d8b6a2"/><path d="M15.2 16Q13.6 2.6 22 2.4Q30.4 2.6 28.8 16Q28.4 8.6 22 8.2Q15.6 8.6 15.2 16Z" fill="#aaa39c"/><path d="M18.2 14.6h2.6M23.2 14.6h2.6" stroke="#5c4238" stroke-width="1.2"/><path d="M22 16v4.4" stroke="#b08c78" stroke-width="1.2"/><path d="M20 22.6h4" stroke="#70392e" stroke-width="1.4"/></svg>
<div style="left:1695px;top:847px;width:48px;height:6px;background:#2dbf3a;"></div>
<div style="left:1745px;top:801px;width:52px;height:52px;background:#000;border:1px solid #a01818;box-sizing:border-box;"></div>
<div style="left:1797px;top:801px;width:45px;height:52px;background:#59d98a;"></div>
<svg class="i" style="left:1799px;top:803px" width="44" height="48" viewBox="0 0 44 44" preserveAspectRatio="none"><rect width="44" height="44" fill="#1ea0e6"/><path d="M10.4 2.9L17.5 10.4M33 2.9L26.7 10.4" stroke="#e4f4ff" stroke-width="2" stroke-linecap="round"/><rect x="16.7" y="9.6" width="10.4" height="5.4" rx="1" fill="#dceefa"/><rect x="5.2" y="16.5" width="33.8" height="22.1" rx="6.5" fill="none" stroke="#f2faff" stroke-width="3.8"/><path d="M11 41.6H33" stroke="#e4f4ff" stroke-width="1.6" stroke-linecap="round"/><text x="9.4" y="34.6" font-family="Liberation Sans" font-weight="700" font-size="18" fill="#f4fbff" textLength="24.6" lengthAdjust="spacingAndGlyphs">Live</text></svg>
<div style="left:1171px;top:863px;width:722px;height:37px;background:linear-gradient(#5647a8 0,#4a3d94 40%,#3a3072 100%);box-shadow:0 1.7px 0 #1d1736;"></div>
<div style="left:1171px;top:863px;width:24px;height:37px;background:linear-gradient(90deg,rgba(48,48,48,.55),rgba(48,48,48,0));"></div>
<svg class="i" style="left:1140.5px;top:873.0px;" width="16" height="16"><use href="#sect"/></svg>
<span id="t173" class="t" style="top:874.2px;line-height:15.5px;font-size:11.5px;color:#f1efff;font-weight:700;left:1214px;letter-spacing:0.328px;">01:56:03.11</span>
<span id="t174" class="t" style="top:874.2px;line-height:15.5px;font-size:11.5px;color:#f1efff;font-weight:700;left:1374px;letter-spacing:-0.061px;">World News</span>
<span id="t175" class="t" style="top:874.2px;line-height:15.5px;font-size:11.5px;color:#f1efff;font-weight:700;left:1574px;letter-spacing:0.380px;">0031:13.15</span>
<div style="left:1842px;top:863px;width:51px;height:37px;overflow:hidden">
<span class="t" style="left:2px;top:2px;line-height:14px;font-size:11.5px;font-weight:700;color:#f1efff;letter-spacing:0.2px">00:49:35.</span>
<span class="t" style="left:2px;top:15px;line-height:14px;font-size:11.5px;font-weight:700;color:#f1efff;letter-spacing:0.2px">-22:53:31</span>
</div>
<div style="left:1192px;top:902px;width:701px;height:50px;background:linear-gradient(#fbdcfb 0,#f7c5f9 1.5px,#f3c0f5 10%,#d8a4da 52%,#bd88be 90%,#b783b7 100%);box-shadow:0 1.7px 0 #2b1a31;"></div>
<span id="t176" class="t" style="top:903.5px;line-height:15px;font-size:11px;color:#1d0a24;left:1194px;">12</span>
<span id="t177" class="t" style="top:919.5px;line-height:15px;font-size:11px;color:#1d0a24;left:1213px;letter-spacing:0.291px;">01:56:03.11</span>
<span id="t178" class="t" style="top:919.5px;line-height:15px;font-size:11px;color:#1d0a24;left:1373.3px;letter-spacing:-0.331px;">The NASA Probe Named Parker</span>
<span id="t179" class="t" style="top:919.5px;line-height:15px;font-size:11px;color:#1d0a24;left:1573px;letter-spacing:0.144px;">0031:13.13</span>
<svg class="i" style="left:1656px;top:911px;" width="32" height="32"><use href="#chk"/></svg>
<div style="left:1842px;top:903px;width:51px;height:30px;overflow:hidden">
<span class="t" style="left:2px;top:1px;line-height:14px;font-size:11px;color:#1d0a24;letter-spacing:0.1px;">00:49:35.0</span>
<span class="t" style="left:2.3px;top:14px;line-height:14px;font-size:11px;color:#1d0a24;letter-spacing:0.1px;">-22:53:31</span>
</div>
<div style="left:1693px;top:903px;width:149px;height:48px;background:#31e431;"></div>
<svg class="i" style="left:1700px;top:905px" width="34" height="44" viewBox="0 0 34 44" preserveAspectRatio="none"><rect width="34" height="44" fill="#1a1a1a"/><rect y="28" width="34" height="16" fill="#9c9c9c"/><path d="M0 30Q8 27 16 29T34 28V32H0Z" fill="#7a7a7a"/><path d="M0 38Q10 35 20 38T34 37V44H0Z" fill="#b2b2b2"/><path d="M5 28L9 17L13 9L18 5L24 8L25 15L29 20L31 30L24 33L17 30L11 32Z" fill="#6e6e6e"/><path d="M14 8L18 5L23 8L22 14L17 16L13 13Z" fill="#efefef"/><path d="M10 20L14 16L16 22L12 26ZM19 17L24 16L25 22L21 25ZM14 25L19 24L20 30L15 30ZM24 24L28 22L30 29L26 30Z" fill="#e4e4e4"/><path d="M2 24L13 12" stroke="#d0d0d0" stroke-width="0.9"/><path d="M8 29L12 21M22 31L20 24M27 31L28 25" stroke="#fafafa" stroke-width="1.2"/><g fill="#dcdcdc"><rect x="4" y="12" width="1.2" height="1.2"/><rect x="26" y="10" width="1.2" height="1.2"/><rect x="7" y="6" width="1" height="1"/><rect x="29" y="16" width="1" height="1"/></g><g fill="#c8c8c8"><rect x="3" y="34" width="2" height="1"/><rect x="12" y="36" width="3" height="1"/><rect x="22" y="35" width="2" height="1"/><rect x="28" y="40" width="3" height="1"/><rect x="8" y="41" width="2" height="1"/></g></svg>
<svg class="i" style="left:1743.5px;top:905px" width="44" height="44" viewBox="0 0 44 44" preserveAspectRatio="none"><rect width="44" height="44" fill="#1ea0e6"/><path d="M10.4 2.9L17.5 10.4M33 2.9L26.7 10.4" stroke="#e4f4ff" stroke-width="2" stroke-linecap="round"/><rect x="16.7" y="9.6" width="10.4" height="5.4" rx="1" fill="#dceefa"/><rect x="5.2" y="16.5" width="33.8" height="22.1" rx="6.5" fill="none" stroke="#f2faff" stroke-width="3.8"/><path d="M11 41.6H33" stroke="#e4f4ff" stroke-width="1.6" stroke-linecap="round"/><text x="9.4" y="34.6" font-family="Liberation Sans" font-weight="700" font-size="18" fill="#f4fbff" textLength="24.6" lengthAdjust="spacingAndGlyphs">Live</text></svg>
<svg class="i" style="left:1791px;top:909px" width="44" height="35" viewBox="0 0 44 34" preserveAspectRatio="none"><rect width="44" height="34" fill="#050403"/><ellipse cx="17" cy="17" rx="4.6" ry="6.6" fill="#4a342b"/><path d="M12 15Q13 8 18 9Q22 9 22 15Q19 11 15 12Z" fill="#150e0b"/><ellipse cx="33" cy="16" rx="4.4" ry="8" fill="#33231d"/><path d="M12 26Q17 22 23 27L23 34H10Z" fill="#1c1411"/><ellipse cx="16" cy="15.6" rx="1" ry="0.7" fill="#8a6a5c"/></svg>
<div style="left:1791px;top:944px;width:44px;height:7px;background:#2dbf3a;"></div>
<div style="left:1839px;top:913px;width:3px;height:27px;background:#0a0a0a;"></div>
<div style="left:1740px;top:903px;width:2px;height:48px;background:#86ee86;opacity:.45;"></div>
<div style="left:1788px;top:903px;width:2px;height:48px;background:#86ee86;opacity:.45;"></div>
<div style="left:1192px;top:954px;width:701px;height:42px;background:linear-gradient(#3b3b3b 0,#2e2e2e 45%,#1c1c1c 100%);box-shadow:0 1.7px 0 #141414;"></div>
<span id="t182" class="t" style="top:955.5px;line-height:15px;font-size:11px;color:#d088d0;left:1194px;">13</span>
<span id="t183" class="t" style="top:967.5px;line-height:15px;font-size:11px;color:#d088d0;left:1213px;letter-spacing:0.216px;">02:27:16.24</span>
<span id="t184" class="t" style="top:955.5px;line-height:15px;font-size:11px;color:#d088d0;left:1373.3px;letter-spacing:-0.116px;">Scarlet Johansson e Mark Ruffalo contro</span>
<span id="t185" class="t" style="top:968.5px;line-height:15px;font-size:11px;color:#d088d0;left:1373.3px;letter-spacing:-0.219px;">i Golden Globe: "Razzisti e sessisti"</span>
<span id="t186" class="t" style="top:967.5px;line-height:15px;font-size:11px;color:#d088d0;left:1573px;letter-spacing:0.144px;">0000:00.01</span>
<svg class="i" style="left:1656px;top:959px;" width="32" height="32"><use href="#chk"/></svg>
<div style="left:1842px;top:955px;width:51px;height:30px;overflow:hidden">
<span class="t" style="left:2px;top:1px;line-height:14px;font-size:11px;color:#d088d0;letter-spacing:0.1px;">01:20:48.</span>
<span class="t" style="left:2.3px;top:14px;line-height:14px;font-size:11px;color:#d088d0;letter-spacing:0.1px;">-22:53:31</span>
</div>
<div style="left:1192px;top:998px;width:701px;height:42px;background:linear-gradient(#3b3b3b 0,#2e2e2e 45%,#1c1c1c 100%);box-shadow:0 1.7px 0 #141414;"></div>
<span id="t189" class="t" style="top:999.5px;line-height:15px;font-size:11px;color:#d088d0;left:1194px;">14</span>
<span id="t190" class="t" style="top:1012.5px;line-height:15px;font-size:11px;color:#d088d0;left:1213px;letter-spacing:0.216px;">02:27:16.25</span>
<span id="t191" class="t" style="top:999.5px;line-height:15px;font-size:11px;color:#d088d0;left:1373.3px;letter-spacing:0.033px;">Magistretti, un’artista innovatore e di</span>
<span id="t192" class="t" style="top:1012.5px;line-height:15px;font-size:11px;color:#d088d0;left:1573px;letter-spacing:0.144px;">0000:00.01</span>
<svg class="i" style="left:1656px;top:1004px;" width="32" height="32"><use href="#chk"/></svg>
<div style="left:1842px;top:999px;width:51px;height:30px;overflow:hidden">
<span class="t" style="left:2px;top:1px;line-height:14px;font-size:11px;color:#d088d0;letter-spacing:0.1px;">01:20:48.</span>
<span class="t" style="left:2px;top:14px;line-height:14px;font-size:11px;color:#d088d0;letter-spacing:0.1px;"></span>
</div>
<div style="left:1132px;top:200px;width:778px;height:16px;background:linear-gradient(#5a5a5a 0,#444 1px,#3e3e3e 100%);"></div>
<div style="left:1132px;top:216px;width:778px;height:1px;background:#262626;"></div>
<span id="t195" class="t" style="top:201.5px;line-height:15px;font-size:11px;color:#ececec;left:1137px;letter-spacing:-0.319px;">Row Number</span>
<span id="t196" class="t" style="top:201.5px;line-height:15px;font-size:11px;color:#ececec;left:1217px;letter-spacing:-0.133px;">On-Air</span>
<span id="t197" class="t" style="top:201.5px;line-height:15px;font-size:11px;color:#ececec;left:1377px;letter-spacing:-0.139px;">Description</span>
<span id="t198" class="t" style="top:201.5px;line-height:15px;font-size:11px;color:#ececec;left:1577px;letter-spacing:-0.245px;">Dur</span>
<span id="t199" class="t" style="top:201.5px;line-height:15px;font-size:11px;color:#ececec;left:1657px;letter-spacing:-0.569px;">On...</span>
<span id="t200" class="t" style="top:201.5px;line-height:15px;font-size:11px;color:#ececec;left:1697px;letter-spacing:-0.188px;">Video</span>
<span id="t201" class="t" style="top:201.5px;line-height:15px;font-size:11px;color:#ececec;left:1847px;letter-spacing:-0.482px;">Sch Time</span>
<div style="left:1211px;top:201px;width:1px;height:15px;background:#2c2c2c;"></div>
<div style="left:1212px;top:201px;width:1px;height:15px;background:#565656;"></div>
<div style="left:1371px;top:201px;width:1px;height:15px;background:#2c2c2c;"></div>
<div style="left:1372px;top:201px;width:1px;height:15px;background:#565656;"></div>
<div style="left:1571px;top:201px;width:1px;height:15px;background:#2c2c2c;"></div>
<div style="left:1572px;top:201px;width:1px;height:15px;background:#565656;"></div>
<div style="left:1651px;top:201px;width:1px;height:15px;background:#2c2c2c;"></div>
<div style="left:1652px;top:201px;width:1px;height:15px;background:#565656;"></div>
<div style="left:1691px;top:201px;width:1px;height:15px;background:#2c2c2c;"></div>
<div style="left:1692px;top:201px;width:1px;height:15px;background:#565656;"></div>
<div style="left:1841px;top:201px;width:1px;height:15px;background:#2c2c2c;"></div>
<div style="left:1842px;top:201px;width:1px;height:15px;background:#565656;"></div>
<div style="left:1893px;top:217px;width:17px;height:800px;background:#2c2c2c;"></div>
<svg class="i" style="left:1896px;top:221px" width="10" height="6"><path d="M0.5 5.5L5 0.5L9.5 5.5Z" fill="#9a9a9a"/></svg>
<svg class="i" style="left:1896px;top:1007px" width="10" height="6"><path d="M0.5 0.5L5 5.5L9.5 0.5Z" fill="#9a9a9a"/></svg>
<div style="left:1896px;top:283px;width:13px;height:690px;background:linear-gradient(90deg,#767676,#8a8a8a 40%,#7c7c7c);border-radius:3px;"></div>
<div style="left:1132px;top:1017px;width:778px;height:14px;background:#2c2c2c;"></div>
<div style="left:1151px;top:1019px;width:380px;height:12px;background:linear-gradient(#8c8c8c,#7a7a7a);border-radius:3px;"></div>
<svg class="i" style="left:1137px;top:1020px" width="6" height="10"><path d="M5.5 0.5L0.5 5L5.5 9.5Z" fill="#9a9a9a"/></svg>
<svg class="i" style="left:1882px;top:1020px" width="6" height="10"><path d="M0.5 0.5L5.5 5L0.5 9.5Z" fill="#9a9a9a"/></svg>
</div></div>
<div style="left:1910px;top:199px;width:5px;height:832px;background:#3a3a3a;"></div></div></body></html>
